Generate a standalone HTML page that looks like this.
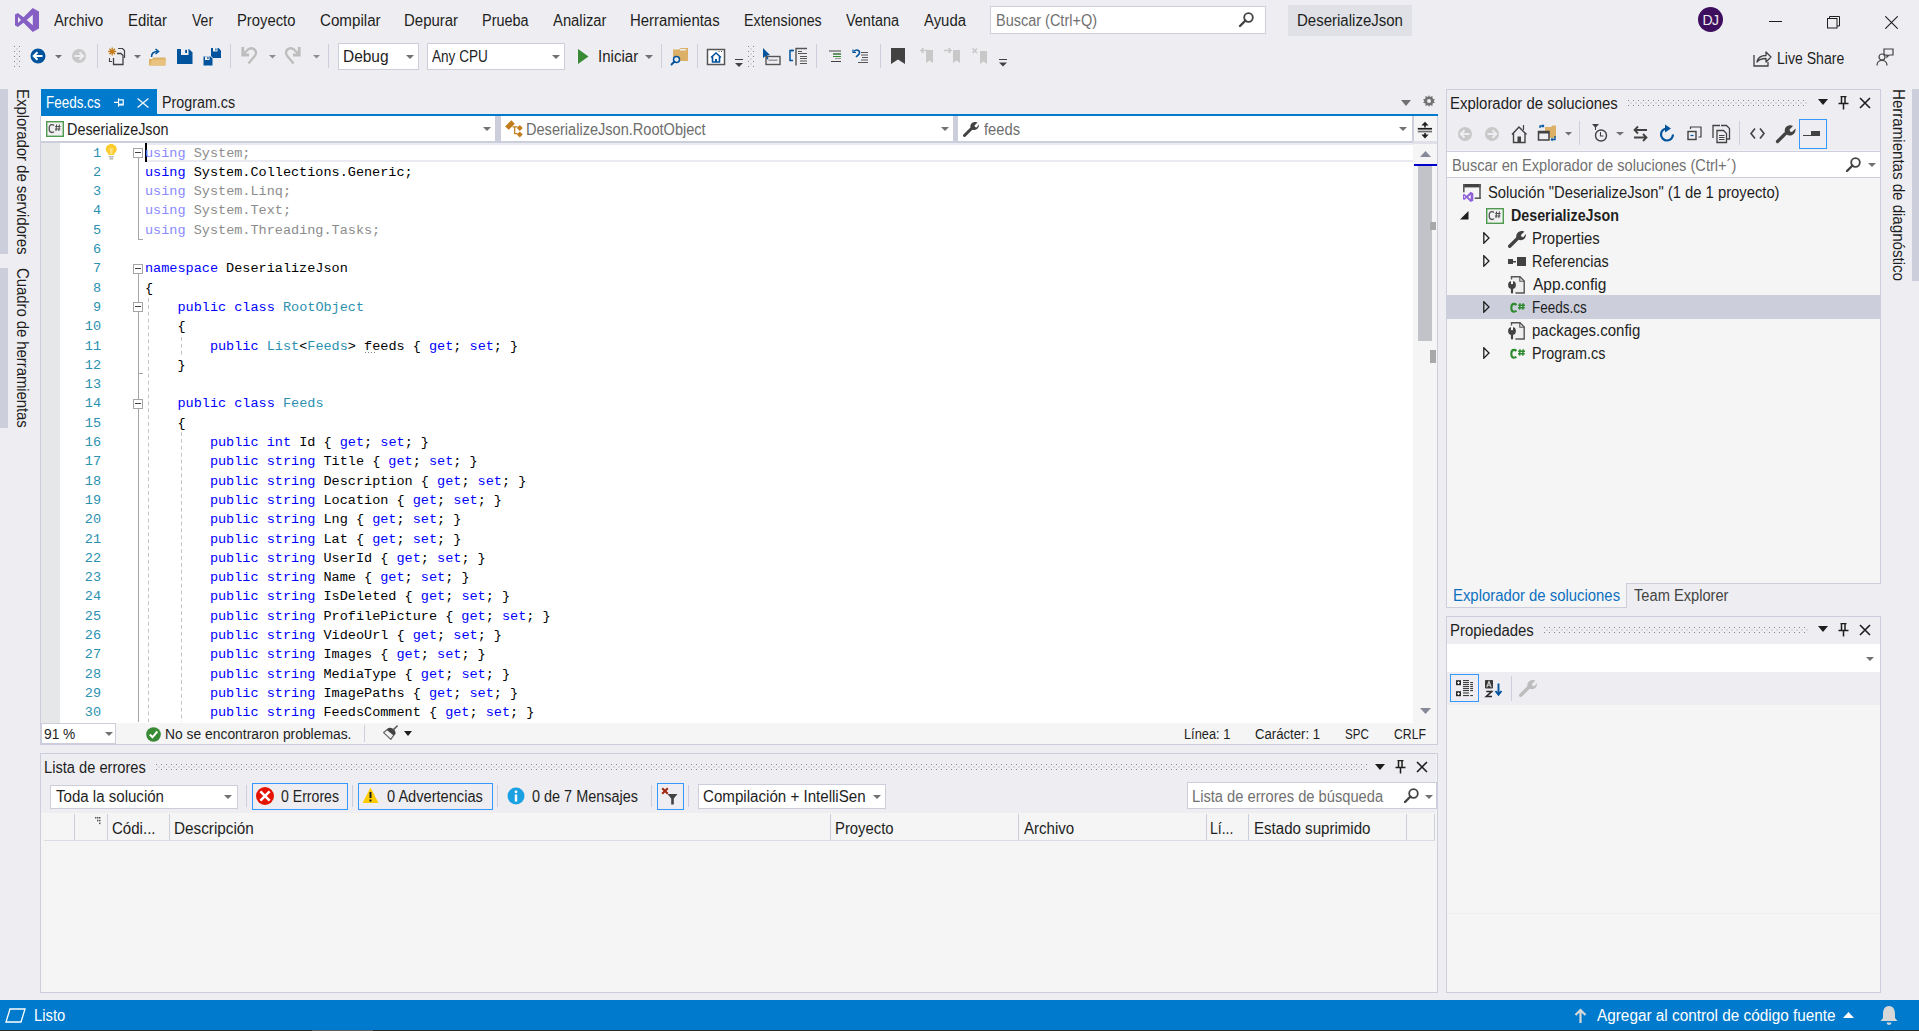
<!DOCTYPE html>
<html><head><meta charset="utf-8">
<style>
*{margin:0;padding:0;box-sizing:border-box}
html,body{width:1919px;height:1031px;overflow:hidden;background:#EEEEF2;font-family:"Liberation Sans",sans-serif;color:#1E1E1E}
.a{position:absolute}
.t{position:absolute;white-space:nowrap;font-size:16px;line-height:19px;transform-origin:0 0}
.sep{position:absolute;width:1px;background:#CCCEDB}
.dd{position:absolute;width:0;height:0;border-left:4px solid transparent;border-right:4px solid transparent;border-top:4px solid #717171}
.grip{position:absolute;background-image:radial-gradient(#B5B5C0 0.8px,transparent 1px);background-size:4px 4px}
.code{position:absolute;left:145px;top:143.6px;font-family:"Liberation Mono",monospace;font-size:13.53px;line-height:19.3px;white-space:pre;color:#000}
.ln{position:absolute;left:60px;width:41px;top:143.6px;font-family:"Liberation Mono",monospace;font-size:13.53px;line-height:19.3px;white-space:pre;color:#2B91AF;text-align:right}
.k{color:#0000FF}.ty{color:#2B91AF}.fk{color:#8A8AFF}.fg{color:#8C8C8C}
</style></head><body>

<!-- ===== TITLE / MENU BAR ===== -->
<svg class="a" style="left:15px;top:8px" width="24" height="24" viewBox="0 0 24 24">
<path d="M17.7 0 L24 3.4 L24 20.6 L17.7 24 L8.5 14.7 L2.8 18.9 L0 17.2 L0 6.5 L2.8 5 L8.5 9.3 Z M17.8 6.7 L11.8 11.9 L17.8 17.2 Z M3 8.7 L3 15.1 L6 11.9 Z" fill="#865FC5" fill-rule="evenodd"/>
</svg>
<div class="t" style="left:53.7px;top:11px;transform:scaleX(0.925)">Archivo</div>
<div class="t" style="left:127.5px;top:11px;transform:scaleX(0.931)">Editar</div>
<div class="t" style="left:191.6px;top:11px;transform:scaleX(0.878)">Ver</div>
<div class="t" style="left:237.1px;top:11px;transform:scaleX(0.925)">Proyecto</div>
<div class="t" style="left:319.7px;top:11px;transform:scaleX(0.947)">Compilar</div>
<div class="t" style="left:404.2px;top:11px;transform:scaleX(0.936)">Depurar</div>
<div class="t" style="left:481.8px;top:11px;transform:scaleX(0.903)">Prueba</div>
<div class="t" style="left:552.7px;top:11px;transform:scaleX(0.926)">Analizar</div>
<div class="t" style="left:630.4px;top:11px;transform:scaleX(0.933)">Herramientas</div>
<div class="t" style="left:744.1px;top:11px;transform:scaleX(0.892)">Extensiones</div>
<div class="t" style="left:845.7px;top:11px;transform:scaleX(0.902)">Ventana</div>
<div class="t" style="left:923.7px;top:11px;transform:scaleX(0.931)">Ayuda</div>

<div class="a" style="left:990px;top:6px;width:276px;height:28px;background:#fff;border:1px solid #CCCEDB"></div>
<div class="t" style="left:995.7px;top:11px;color:#717171;transform:scaleX(0.905)">Buscar (Ctrl+Q)</div>
<svg class="a" style="left:1238px;top:11px" width="17" height="17" viewBox="0 0 17 17"><circle cx="10.5" cy="6.5" r="4.3" fill="none" stroke="#424242" stroke-width="1.8"/><path d="M7.5 9.5 L2 15" stroke="#424242" stroke-width="2.4" stroke-linecap="round"/></svg>

<div class="a" style="left:1288px;top:5px;width:124px;height:31px;background:#DFE1E6"></div>
<div class="t" style="left:1296.8px;top:11px;transform:scaleX(0.938)">DeserializeJson</div>

<div class="a" style="left:1698px;top:7px;width:25px;height:25px;border-radius:50%;background:#3D0F5E"></div>
<div class="t" style="left:1700px;top:11px;width:21px;text-align:center;color:#EDEDED;font-size:14px;letter-spacing:-0.5px">DJ</div>

<div class="a" style="left:1769px;top:21px;width:13px;height:1px;background:#1E1E1E"></div>
<svg class="a" style="left:1827px;top:16px" width="13" height="13" viewBox="0 0 13 13"><rect x="0.5" y="2.5" width="9.5" height="9.5" fill="none" stroke="#1E1E1E"/><path d="M2.5 2.5 V0.5 H12.5 V10 H10" fill="none" stroke="#1E1E1E"/></svg>
<svg class="a" style="left:1885px;top:16px" width="13" height="13" viewBox="0 0 13 13"><path d="M0.3 0.3 L12.7 12.7 M12.7 0.3 L0.3 12.7" stroke="#1E1E1E" stroke-width="1.1"/></svg>

<!-- ===== TOOLBAR ===== -->
<svg class="a" style="left:14px;top:46px" width="6" height="21"><rect x="0" y="0" width="1" height="1" fill="#868686"/><rect x="5" y="0" width="1" height="1" fill="#868686"/><rect x="2.5" y="2.5" width="1" height="1" fill="#A0A0A0"/><rect x="0" y="5" width="1" height="1" fill="#868686"/><rect x="5" y="5" width="1" height="1" fill="#868686"/><rect x="2.5" y="7.5" width="1" height="1" fill="#A0A0A0"/><rect x="0" y="10" width="1" height="1" fill="#868686"/><rect x="5" y="10" width="1" height="1" fill="#868686"/><rect x="2.5" y="12.5" width="1" height="1" fill="#A0A0A0"/><rect x="0" y="15" width="1" height="1" fill="#868686"/><rect x="5" y="15" width="1" height="1" fill="#868686"/><rect x="2.5" y="17.5" width="1" height="1" fill="#A0A0A0"/><rect x="0" y="20" width="1" height="1" fill="#868686"/><rect x="5" y="20" width="1" height="1" fill="#868686"/></svg>

<svg class="a" style="left:0;top:0" width="1919" height="80" viewBox="0 0 1919 80">
<!-- back -->
<circle cx="38" cy="56" r="7.5" fill="#00539C"/>
<path d="M42.5 56 H34 M37.5 52.2 L33.7 56 L37.5 59.8" fill="none" stroke="#fff" stroke-width="2"/>
<path d="M55 55 H62 L58.5 58.5 Z" fill="#717171"/>
<circle cx="79" cy="56" r="7" fill="#C8C8C8"/>
<path d="M74.5 56 H83 M79.5 52.2 L83.3 56 L79.5 59.8" fill="none" stroke="#EEEEF2" stroke-width="2"/>
<rect x="97" y="44" width="1" height="24" fill="#CCCEDB"/>
<!-- new project -->
<path d="M112.2 47.5 V55.5 M108.2 51.5 H116.2 M109.4 48.7 L115 54.3 M115 48.7 L109.4 54.3" stroke="#C27D1A" stroke-width="1.3"/>
<path d="M118 48.5 H122.5 L124.5 50.5 V58" fill="none" stroke="#424242" stroke-width="1.2"/>
<path d="M113.5 58 V64.5 H123 V55.5 L121 53.5 H117" fill="#EEEEF2" stroke="#424242" stroke-width="1.3"/>
<path d="M109.5 58 V61.5 H112" fill="none" stroke="#424242" stroke-width="1.1"/>
<path d="M134 55 H141 L137.5 58.5 Z" fill="#717171"/>
<!-- open -->
<path d="M149 59 H152 L153.5 57.5 H165.5 V65.5 H149 Z" fill="#DCB067"/>
<path d="M149.5 65.5 L152.5 59.5 H166.5 L164 65.5 Z" fill="#E8C27E"/>
<path d="M151.5 57 C151.5 53 154 51.5 157.5 51.5" fill="none" stroke="#00539C" stroke-width="1.6"/>
<path d="M155.5 49 L158.5 51.5 L155.5 54" fill="none" stroke="#00539C" stroke-width="1.6"/>
<!-- save -->
<path d="M177 49 H189 L192.5 52.5 V64 H177 Z" fill="#00539C"/>
<rect x="181" y="49" width="7.5" height="6" fill="#EEEEF2"/>
<rect x="185.2" y="49.8" width="1.8" height="3.2" fill="#00539C"/>
<!-- save all -->
<path d="M211 48 H218.5 L221 50.5 V58 H211 Z" fill="#00539C"/>
<rect x="213" y="48" width="4.5" height="3.5" fill="#EEEEF2"/>
<rect x="215.3" y="48.5" width="1.2" height="2" fill="#00539C"/>
<path d="M203 56 H210.5 L213 58.5 V66 H203 Z" fill="#00539C" stroke="#EEEEF2" stroke-width="1"/>
<rect x="205" y="56.5" width="4.5" height="3.5" fill="#EEEEF2"/>
<rect x="207.3" y="57" width="1.2" height="2" fill="#00539C"/>
<rect x="230" y="44" width="1" height="24" fill="#CCCEDB"/>
<!-- undo/redo -->
<path d="M242.8 47 V55 H249" fill="none" stroke="#BDBDBD" stroke-width="2.8"/>
<path d="M243.5 54 L248 49.5 C251 47 256 48.5 256 53 C256 55.5 253 58 248.5 63.5" fill="none" stroke="#BDBDBD" stroke-width="2.3"/>
<path d="M269 55 H276 L272.5 58.5 Z" fill="#8E8E8E"/>
<path d="M299.2 47 V55 H293" fill="none" stroke="#BDBDBD" stroke-width="2.8"/>
<path d="M298.5 54 L294 49.5 C291 47 286 48.5 286 53 C286 55.5 289 58 293.5 63.5" fill="none" stroke="#BDBDBD" stroke-width="2.3"/>
<path d="M313 55 H320 L316.5 58.5 Z" fill="#8E8E8E"/>
<rect x="328" y="44" width="1" height="24" fill="#CCCEDB"/>
<rect x="661" y="44" width="1" height="24" fill="#CCCEDB"/>
<!-- find in files -->
<path d="M673 49.5 H679 L680.5 48 H688 V61 H673 Z" fill="#DCB067"/>
<rect x="680" y="49" width="6" height="1.5" fill="#EEEEF2"/>
<circle cx="676.5" cy="59.5" r="3" fill="#EEEEF2" stroke="#00539C" stroke-width="1.5"/>
<path d="M674.5 61.5 L671.5 64.5" stroke="#00539C" stroke-width="1.8" stroke-linecap="round"/>
<rect x="697" y="44" width="1" height="24" fill="#CCCEDB"/>
<!-- browser -->
<rect x="707.5" y="49.5" width="17" height="15" fill="#fff" stroke="#555" stroke-width="1.5"/>
<path d="M711 57.5 L716 53 L721 57.5 M712.5 56.5 V62 H719.5 V56.5" fill="none" stroke="#00539C" stroke-width="1.6"/>
<rect x="715" y="59" width="2" height="3" fill="#00539C"/>
<rect x="718.5" y="51" width="1" height="1" fill="#555"/><rect x="721" y="51" width="1" height="1" fill="#555"/>
<rect x="735" y="59" width="8" height="1" fill="#424242"/>
<path d="M735 63 H743 L739 67 Z" fill="#424242"/>
<!-- cursor box -->
<path d="M763 48 L770 55 L767 55.5 L768.5 59 L767 59.5 L765.5 56 L763 58 Z" fill="#00539C"/>
<rect x="766" y="56.5" width="14" height="8" fill="none" stroke="#555" stroke-width="1.4"/>
<rect x="768.5" y="59.5" width="9" height="1.5" fill="#999"/>
<!-- brackets -->
<path d="M793 50.5 H790 V60.5 H793" fill="none" stroke="#00539C" stroke-width="1.5"/>
<path d="M791 50.5 H794" stroke="#00539C" stroke-width="1.5"/>
<path d="M796 65.5 V48.5 H807" fill="none" stroke="#555" stroke-width="1.4"/>
<path d="M798 51.5 H802 M798 53.5 H807 M800 56.5 H807 M800 58.5 H807 M800 61 H807 M800 63.5 H807" stroke="#555" stroke-width="1"/>
<rect x="816" y="44" width="1" height="24" fill="#CCCEDB"/>
<!-- indent -->
<path d="M829 51 H841 M833 54 H841 M833 56.5 H841 M831 61.5 H841" stroke="#424242" stroke-width="1.1"/>
<path d="M833 54 H841 M833 56.5 H841" stroke="#388A34" stroke-width="1.1"/>
<path d="M835 58.5 H841" stroke="#999" stroke-width="1.1"/>
<path d="M854 51.5 C856 49 860 50 859.5 53 C859 55 857 56 856 57" fill="none" stroke="#00539C" stroke-width="1.5"/>
<path d="M853 49.5 V52.5 H856" fill="none" stroke="#00539C" stroke-width="1.2"/>
<path d="M861 52.5 H868 M861 55 H868 M862 57.5 H868 M861 60 H868 M858 62.5 H868" stroke="#555" stroke-width="1.1"/>
<rect x="880" y="44" width="1" height="24" fill="#CCCEDB"/>
<!-- bookmarks -->
<path d="M891 48 H905 V64 L898 59.5 L891 64 Z" fill="#424242"/>
<path d="M926 50 H933 V63 L929.5 60.5 L926 63 Z" fill="#C8C8C8"/>
<path d="M928 50.5 H921 M923.5 48 L921 50.5 L923.5 53" fill="none" stroke="#C8C8C8" stroke-width="1.5"/>
<path d="M953 50 H960 V63 L956.5 60.5 L953 63 Z" fill="#C8C8C8"/>
<path d="M944 50.5 H951 M948.5 48 L951 50.5 L948.5 53" fill="none" stroke="#C8C8C8" stroke-width="1.5"/>
<path d="M980 51 H987 V64 L983.5 61.5 L980 64 Z" fill="#C8C8C8"/>
<path d="M972.5 48.5 L977 53 M977 48.5 L972.5 53" stroke="#C8C8C8" stroke-width="1.5"/>
<rect x="999" y="59" width="8" height="1" fill="#424242"/>
<path d="M999 62.5 H1007 L1003 66.5 Z" fill="#424242"/>
</svg>


<div class="a" style="left:338px;top:43px;width:81px;height:27px;background:#fff;border:1px solid #CCCEDB"></div>
<div class="t" style="left:342.5px;top:47px;transform:scaleX(0.966)">Debug</div>
<div class="dd" style="left:406px;top:55px"></div>
<div class="a" style="left:427px;top:43px;width:138px;height:27px;background:#fff;border:1px solid #CCCEDB"></div>
<div class="t" style="left:432.2px;top:47px;transform:scaleX(0.849)">Any CPU</div>
<div class="dd" style="left:552px;top:55px"></div>
<svg class="a" style="left:578px;top:49px" width="11" height="15" viewBox="0 0 11 15"><path d="M0 0 L10.5 7.5 L0 15 Z" fill="#388A34"/></svg>
<div class="t" style="left:598.3px;top:47px;transform:scaleX(0.941)">Iniciar</div>
<div class="dd" style="left:645px;top:55px"></div>

<div class="a" style="left:1753px;top:50px"><svg width="19" height="17" viewBox="0 0 19 17"><path d="M1 5 V16 H15 V12" fill="none" stroke="#424242" stroke-width="1.3"/><path d="M4 12 C5 7 9 5.5 13 5.5 V2 L18 7 L13 12 V8.5 C9 8.5 6 9.5 4 12 Z" fill="none" stroke="#424242" stroke-width="1.3" stroke-linejoin="round"/></svg></div>
<div class="t" style="left:1777.4px;top:49px;transform:scaleX(0.879)">Live Share</div>
<svg class="a" style="left:1876px;top:48px" width="18" height="18" viewBox="0 0 18 18"><circle cx="6" cy="9" r="3" fill="none" stroke="#424242" stroke-width="1.2"/><path d="M1 17.5 C1 13.5 3 12.5 6 12.5 C9 12.5 11 13.5 11 17.5" fill="none" stroke="#424242" stroke-width="1.2"/><path d="M8 1 H17 V7 H13 L11 9 V7 H8 Z" fill="none" stroke="#424242" stroke-width="1.2"/></svg>

<svg class="a" style="left:748px;top:46px" width="6" height="21"><rect x="0" y="0" width="1" height="1" fill="#868686"/><rect x="5" y="0" width="1" height="1" fill="#868686"/><rect x="2.5" y="2.5" width="1" height="1" fill="#A0A0A0"/><rect x="0" y="5" width="1" height="1" fill="#868686"/><rect x="5" y="5" width="1" height="1" fill="#868686"/><rect x="2.5" y="7.5" width="1" height="1" fill="#A0A0A0"/><rect x="0" y="10" width="1" height="1" fill="#868686"/><rect x="5" y="10" width="1" height="1" fill="#868686"/><rect x="2.5" y="12.5" width="1" height="1" fill="#A0A0A0"/><rect x="0" y="15" width="1" height="1" fill="#868686"/><rect x="5" y="15" width="1" height="1" fill="#868686"/><rect x="2.5" y="17.5" width="1" height="1" fill="#A0A0A0"/><rect x="0" y="20" width="1" height="1" fill="#868686"/><rect x="5" y="20" width="1" height="1" fill="#868686"/></svg>
<!-- ===== LEFT SIDE TABS ===== -->
<div class="a" style="left:0;top:89px;width:8px;height:165px;background:#CCCEDB"></div>
<div class="a" style="left:0;top:268px;width:8px;height:160px;background:#CCCEDB"></div>
<div class="t" style="left:12.5px;top:89px;writing-mode:vertical-rl;line-height:18px;letter-spacing:-0.1px;transform:scaleY(0.943)">Explorador de servidores</div>
<div class="t" style="left:12.5px;top:268px;writing-mode:vertical-rl;line-height:18px;letter-spacing:-0.1px;transform:scaleY(0.938)">Cuadro de herramientas</div>

<!-- ===== RIGHT SIDE TAB ===== -->
<div class="a" style="left:1912px;top:89px;width:7px;height:192px;background:#CCCEDB"></div>
<div class="t" style="left:1889px;top:89px;writing-mode:vertical-rl;line-height:18px;letter-spacing:-0.1px;transform:scaleY(0.955)">Herramientas de diagnóstico</div>

<!-- ===== EDITOR ===== -->
<div class="a" style="left:41px;top:89px;width:116px;height:25px;background:#007ACC"></div>
<div class="t" style="left:45.7px;top:93px;color:#fff;transform:scaleX(0.840)">Feeds.cs</div>
<svg class="a" style="left:112px;top:96px" width="14" height="13" viewBox="112 96 14 13"><path d="M114 102.4 H118.5 M118.5 98.2 V106.7" stroke="#fff" stroke-width="1.1"/><path d="M118.5 99.8 H123.2 V104.8 H118.5" fill="none" stroke="#fff" stroke-width="1.2"/><rect x="118.5" y="103.6" width="4.8" height="1.6" fill="#EAF2FA"/></svg>
<svg class="a" style="left:136px;top:97px" width="14" height="12" viewBox="136 97 14 12"><path d="M137.6 98.5 L148.4 107.5 M148.4 98.5 L137.6 107.5" stroke="#EEF4FA" stroke-width="1.4"/></svg>
<div class="t" style="left:162.4px;top:93px;transform:scaleX(0.893)">Program.cs</div>
<svg class="a" style="left:1401px;top:100px" width="10" height="6" viewBox="0 0 10 6"><path d="M0 0 H10 L5 6 Z" fill="#717171"/></svg>
<svg class="a" style="left:1423px;top:95px" width="12" height="12" viewBox="0 0 12 12"><path d="M6 0 L7 2 L9.5 1 L9.5 3.5 L12 4.5 L10.5 6 L12 7.5 L9.5 8.5 L9.5 11 L7 10 L6 12 L5 10 L2.5 11 L2.5 8.5 L0 7.5 L1.5 6 L0 4.5 L2.5 3.5 L2.5 1 L5 2 Z" fill="#717171"/><circle cx="6" cy="6" r="2" fill="#EEEEF2"/></svg>

<div class="a" style="left:41px;top:114px;width:1397px;height:2px;background:#007ACC"></div>
<div class="a" style="left:40px;top:116px;width:1398px;height:629px;background:#F5F5F5;border-left:1px solid #CCCEDB;border-right:1px solid #CCCEDB;border-bottom:1px solid #CCCEDB"></div>
<!-- nav bar -->
<div class="a" style="left:41px;top:116px;width:1373px;height:27px;background:#CCCEDB"></div>
<div class="a" style="left:41px;top:116px;width:454px;height:25px;background:#fff"></div>
<div class="a" style="left:501px;top:116px;width:452px;height:25px;background:#fff"></div>
<div class="a" style="left:958px;top:116px;width:454px;height:25px;background:#fff"></div>
<div class="a" style="left:1414px;top:116px;width:23px;height:28px;background:#F5F5F5"></div>
<svg class="a" style="left:46px;top:121px" width="18" height="16" viewBox="0 0 18 16"><rect x="0.7" y="0.7" width="16.6" height="14.6" fill="#F0F0F0" stroke="#4E9A4E" stroke-width="1.4"/><path d="M8 4.6 C7.5 4 6.8 3.7 6 3.7 C4.3 3.7 3.2 5.2 3.2 7.6 C3.2 10 4.3 11.5 6 11.5 C6.8 11.5 7.5 11.2 8 10.6" fill="none" stroke="#505050" stroke-width="1.3"/><path d="M10.6 3.5 L10 10 M13.4 3.5 L12.8 10 M9.2 5.5 H14.6 M9 8 H14.4" stroke="#505050" stroke-width="1.1"/></svg>
<div class="t" style="left:66.7px;top:120px;transform:scaleX(0.899)">DeserializeJson</div>
<svg class="a" style="left:483px;top:127px" width="8" height="4" viewBox="0 0 8 4"><path d="M0 0 H8 L4 4 Z" fill="#717171"/></svg>
<svg class="a" style="left:503px;top:118px" width="22" height="22" viewBox="503 118 22 22"><path d="M511.4 120.2 L514.8 123.8 L508.8 129.8 L505.2 126.4 Z" fill="#C27D1A"/><path d="M512.5 126.8 H517.5 M514.7 126.8 V133.6 H517.5" fill="none" stroke="#C27D1A" stroke-width="1.2"/><path d="M519.8 124.9 L522.7 127.9 L519.8 130.9 L516.9 127.9 Z" fill="#C27D1A"/><path d="M519.8 131.6 L522.7 134.6 L519.8 137.6 L516.9 134.6 Z" fill="#C27D1A"/></svg>
<div class="t" style="left:525.8px;top:120px;color:#6D6D6D;transform:scaleX(0.910)">DeserializeJson.RootObject</div>
<svg class="a" style="left:941px;top:127px" width="8" height="4" viewBox="0 0 8 4"><path d="M0 0 H8 L4 4 Z" fill="#717171"/></svg>
<svg class="a" style="left:963px;top:121px" width="16" height="16" viewBox="0 0 16 16"><path d="M1.5 14.5 L8 8" stroke="#424242" stroke-width="3" stroke-linecap="round"/><path d="M9 2 C11 0.5 14 0.8 14.5 1.5 L11.5 4.5 L12 6 L13.5 6.5 L16 3.5 C16.3 6 14.5 9 11.5 9 C10 9 8.5 8.5 7.5 7.5 C7 5 7.5 3.5 9 2 Z" fill="#424242"/></svg>
<div class="t" style="left:983.9px;top:120px;color:#6D6D6D;transform:scaleX(0.921)">feeds</div>
<svg class="a" style="left:1399px;top:127px" width="8" height="4" viewBox="0 0 8 4"><path d="M0 0 H8 L4 4 Z" fill="#717171"/></svg>
<svg class="a" style="left:1414px;top:118px" width="23" height="24" viewBox="1414 118 23 24"><path d="M1425 121.8 L1428.6 125.6 H1421.4 Z M1425 138.4 L1428.6 134.6 H1421.4 Z" fill="#1E1E1E"/><path d="M1425 125 V127.6 M1425 133 V135.2" stroke="#1E1E1E" stroke-width="1.5"/><rect x="1417.8" y="127.9" width="14.2" height="1.7" fill="#1E1E1E"/><rect x="1417.8" y="130.7" width="14.2" height="1.7" fill="#6E6E6E"/></svg><div class="a" style="left:1413px;top:141px;width:24px;height:3px;background:#DFE0E8"></div>

<!-- code area -->
<div class="a" style="left:41px;top:143px;width:19px;height:580px;background:#E6E7E8"></div>
<div class="a" style="left:60px;top:143px;width:1353px;height:580px;background:#fff"></div>
<div class="a" style="left:145px;top:143px;width:1268px;height:19px;border:2px solid #EAEAF2;border-left:none;border-right:none"></div>
<div class="a" style="left:145px;top:143px;width:2px;height:19px;background:#000"></div>
<!-- outlining -->
<div class="a" style="left:138px;top:158px;width:1px;height:82px;background:#A5A5A5"></div>
<div class="a" style="left:138px;top:239px;width:5px;height:1px;background:#A5A5A5"></div>
<div class="a" style="left:138px;top:273px;width:1px;height:449px;background:#A5A5A5"></div>
<div class="a" style="left:138px;top:373px;width:5px;height:1px;background:#A5A5A5"></div>
<div class="a" style="left:133px;top:148px;width:10px;height:10px;border:1px solid #A5A5A5;background:#fff"></div>
<div class="a" style="left:135px;top:152px;width:6px;height:1px;background:#424242"></div>
<div class="a" style="left:133px;top:264px;width:10px;height:10px;border:1px solid #A5A5A5;background:#fff"></div>
<div class="a" style="left:135px;top:268px;width:6px;height:1px;background:#424242"></div>
<div class="a" style="left:133px;top:302px;width:10px;height:10px;border:1px solid #A5A5A5;background:#fff"></div>
<div class="a" style="left:135px;top:306px;width:6px;height:1px;background:#424242"></div>
<div class="a" style="left:133px;top:399px;width:10px;height:10px;border:1px solid #A5A5A5;background:#fff"></div>
<div class="a" style="left:135px;top:403px;width:6px;height:1px;background:#424242"></div>
<!-- indent guides -->
<div class="a" style="left:148px;top:298px;width:1px;height:424px;background-image:linear-gradient(#C4C4C4 50%,transparent 50%);background-size:1px 6.9px"></div>
<div class="a" style="left:181px;top:337px;width:1px;height:20px;background-image:linear-gradient(#C4C4C4 50%,transparent 50%);background-size:1px 6.9px"></div>
<div class="a" style="left:181px;top:432px;width:1px;height:290px;background-image:linear-gradient(#C4C4C4 50%,transparent 50%);background-size:1px 6.9px"></div>
<!-- lightbulb -->
<svg class="a" style="left:105px;top:143px" width="13" height="18" viewBox="0 0 13 18"><path d="M6.3 1 C9.3 1 11.8 3.3 11.8 6.3 C11.8 8.3 10.5 9.5 9.2 10.8 V12 H3.4 V10.8 C2.1 9.5 0.8 8.3 0.8 6.3 C0.8 3.3 3.3 1 6.3 1 Z" fill="#FDCB2B"/><path d="M3.8 5.2 H8.8 L7.6 7.2 V11 H5 V7.2 Z" fill="#FEE9A0" opacity="0.7"/><path d="M3.8 13.8 H8.8 M4.4 15.8 H8.2" stroke="#ABABAB" stroke-width="1.2"/></svg>
<div class="ln">1
2
3
4
5
6
7
8
9
10
11
12
13
14
15
16
17
18
19
20
21
22
23
24
25
26
27
28
29
30</div>
<div class="code"><span class="fk">using</span> <span class="fg">System;</span>
<span class="k">using</span> System.Collections.Generic;
<span class="fk">using</span> <span class="fg">System.Linq;</span>
<span class="fk">using</span> <span class="fg">System.Text;</span>
<span class="fk">using</span> <span class="fg">System.Threading.Tasks;</span>

<span class="k">namespace</span> DeserializeJson
{
    <span class="k">public</span> <span class="k">class</span> <span class="ty">RootObject</span>
    {
        <span class="k">public</span> <span class="ty">List</span>&lt;<span class="ty">Feeds</span>&gt; feeds { <span class="k">get</span>; <span class="k">set</span>; }
    }

    <span class="k">public</span> <span class="k">class</span> <span class="ty">Feeds</span>
    {
        <span class="k">public</span> <span class="k">int</span> Id { <span class="k">get</span>; <span class="k">set</span>; }
        <span class="k">public</span> <span class="k">string</span> Title { <span class="k">get</span>; <span class="k">set</span>; }
        <span class="k">public</span> <span class="k">string</span> Description { <span class="k">get</span>; <span class="k">set</span>; }
        <span class="k">public</span> <span class="k">string</span> Location { <span class="k">get</span>; <span class="k">set</span>; }
        <span class="k">public</span> <span class="k">string</span> Lng { <span class="k">get</span>; <span class="k">set</span>; }
        <span class="k">public</span> <span class="k">string</span> Lat { <span class="k">get</span>; <span class="k">set</span>; }
        <span class="k">public</span> <span class="k">string</span> UserId { <span class="k">get</span>; <span class="k">set</span>; }
        <span class="k">public</span> <span class="k">string</span> Name { <span class="k">get</span>; <span class="k">set</span>; }
        <span class="k">public</span> <span class="k">string</span> IsDeleted { <span class="k">get</span>; <span class="k">set</span>; }
        <span class="k">public</span> <span class="k">string</span> ProfilePicture { <span class="k">get</span>; <span class="k">set</span>; }
        <span class="k">public</span> <span class="k">string</span> VideoUrl { <span class="k">get</span>; <span class="k">set</span>; }
        <span class="k">public</span> <span class="k">string</span> Images { <span class="k">get</span>; <span class="k">set</span>; }
        <span class="k">public</span> <span class="k">string</span> MediaType { <span class="k">get</span>; <span class="k">set</span>; }
        <span class="k">public</span> <span class="k">string</span> ImagePaths { <span class="k">get</span>; <span class="k">set</span>; }
        <span class="k">public</span> <span class="k">string</span> FeedsComment { <span class="k">get</span>; <span class="k">set</span>; }</div>
<div class="a" style="left:365px;top:352px;width:12px;height:1px;background-image:linear-gradient(90deg,#808080 50%,transparent 50%);background-size:3px 1px"></div>

<!-- scrollbar -->
<div class="a" style="left:1413px;top:144px;width:24px;height:579px;background:#F5F5F5"></div>
<svg class="a" style="left:1420px;top:151px" width="11" height="6" viewBox="0 0 11 6"><path d="M0 6 L5.5 0 L11 6 Z" fill="#868999"/></svg>
<div class="a" style="left:1414px;top:164px;width:23px;height:2px;background:#0000CD"></div>
<div class="a" style="left:1418px;top:166px;width:14px;height:175px;background:#C2C3C9"></div>
<div class="a" style="left:1430px;top:222px;width:6px;height:8px;background:#A8A8A8"></div>
<div class="a" style="left:1430px;top:350px;width:6px;height:13px;background:#A8A8A8"></div>
<svg class="a" style="left:1420px;top:708px" width="11" height="6" viewBox="0 0 11 6"><path d="M0 0 L5.5 6 L11 0 Z" fill="#868999"/></svg>

<!-- editor status row -->
<div class="a" style="left:41px;top:723px;width:75px;height:21px;background:#fff;border:1px solid #CCCEDB"></div>
<div class="t" style="left:44.0px;top:725px;font-size:14px;transform:scaleX(0.982)">91 %</div>
<svg class="a" style="left:105px;top:732px" width="8" height="4" viewBox="0 0 8 4"><path d="M0 0 H8 L4 4 Z" fill="#717171"/></svg>
<svg class="a" style="left:146px;top:727px" width="15" height="15" viewBox="0 0 15 15"><circle cx="7.5" cy="7.5" r="7.3" fill="#388A34"/><path d="M3.8 7.5 L6.5 10.3 L11.3 4.5" fill="none" stroke="#fff" stroke-width="2"/></svg>
<div class="t" style="left:164.9px;top:725px;font-size:14px;transform:scaleX(0.990)">No se encontraron problemas.</div>
<div class="a" style="left:364px;top:725px;width:1px;height:17px;background:#CCCEDB"></div>
<svg class="a" style="left:380px;top:722px" width="20" height="22" viewBox="380 722 20 22"><path d="M383.6 732.6 L388.6 728.6 L395.2 733.2 L390.8 739.4 Z" fill="#F0F0F0" stroke="#6A6A6A" stroke-width="1.3" stroke-linejoin="round"/><path d="M386.8 730 L389.3 727.8 C391.5 727.6 393.3 728.6 394.8 730.6 C395.6 732 395.5 733.3 394.6 734.4 L393.6 735.6 Z" fill="#424242"/><path d="M393.2 729.8 L397.2 726" stroke="#5A5A5A" stroke-width="1.6" stroke-linecap="round"/></svg>
<svg class="a" style="left:404px;top:731px" width="8" height="5" viewBox="0 0 8 5"><path d="M0 0 H8 L4 5 Z" fill="#1E1E1E"/></svg>
<div class="t" style="left:1184.3px;top:725px;font-size:14px;transform:scaleX(0.914)">Línea: 1</div>
<div class="t" style="left:1254.9px;top:725px;font-size:14px;transform:scaleX(0.939)">Carácter: 1</div>
<div class="t" style="left:1345.1px;top:725px;font-size:14px;transform:scaleX(0.827)">SPC</div>
<div class="t" style="left:1393.7px;top:725px;font-size:14px;transform:scaleX(0.874)">CRLF</div>

<!-- ===== ERROR LIST ===== -->
<div class="a" style="left:40px;top:753px;width:1398px;height:240px;background:#F5F5F5;border:1px solid #CCCEDB"></div>
<div class="a" style="left:41px;top:754px;width:1395px;height:59px;background:#EEEEF2"></div>
<div class="t" style="left:44.1px;top:758px;transform:scaleX(0.916)">Lista de errores</div>
<svg class="a" style="left:156px;top:764px" width="1213" height="6"><rect x="0" y="0" width="1" height="1" fill="#868686"/><rect x="0" y="5" width="1" height="1" fill="#868686"/><rect x="2.5" y="2.5" width="1" height="1" fill="#A0A0A0"/><rect x="5" y="0" width="1" height="1" fill="#868686"/><rect x="5" y="5" width="1" height="1" fill="#868686"/><rect x="7.5" y="2.5" width="1" height="1" fill="#A0A0A0"/><rect x="10" y="0" width="1" height="1" fill="#868686"/><rect x="10" y="5" width="1" height="1" fill="#868686"/><rect x="12.5" y="2.5" width="1" height="1" fill="#A0A0A0"/><rect x="15" y="0" width="1" height="1" fill="#868686"/><rect x="15" y="5" width="1" height="1" fill="#868686"/><rect x="17.5" y="2.5" width="1" height="1" fill="#A0A0A0"/><rect x="20" y="0" width="1" height="1" fill="#868686"/><rect x="20" y="5" width="1" height="1" fill="#868686"/><rect x="22.5" y="2.5" width="1" height="1" fill="#A0A0A0"/><rect x="25" y="0" width="1" height="1" fill="#868686"/><rect x="25" y="5" width="1" height="1" fill="#868686"/><rect x="27.5" y="2.5" width="1" height="1" fill="#A0A0A0"/><rect x="30" y="0" width="1" height="1" fill="#868686"/><rect x="30" y="5" width="1" height="1" fill="#868686"/><rect x="32.5" y="2.5" width="1" height="1" fill="#A0A0A0"/><rect x="35" y="0" width="1" height="1" fill="#868686"/><rect x="35" y="5" width="1" height="1" fill="#868686"/><rect x="37.5" y="2.5" width="1" height="1" fill="#A0A0A0"/><rect x="40" y="0" width="1" height="1" fill="#868686"/><rect x="40" y="5" width="1" height="1" fill="#868686"/><rect x="42.5" y="2.5" width="1" height="1" fill="#A0A0A0"/><rect x="45" y="0" width="1" height="1" fill="#868686"/><rect x="45" y="5" width="1" height="1" fill="#868686"/><rect x="47.5" y="2.5" width="1" height="1" fill="#A0A0A0"/><rect x="50" y="0" width="1" height="1" fill="#868686"/><rect x="50" y="5" width="1" height="1" fill="#868686"/><rect x="52.5" y="2.5" width="1" height="1" fill="#A0A0A0"/><rect x="55" y="0" width="1" height="1" fill="#868686"/><rect x="55" y="5" width="1" height="1" fill="#868686"/><rect x="57.5" y="2.5" width="1" height="1" fill="#A0A0A0"/><rect x="60" y="0" width="1" height="1" fill="#868686"/><rect x="60" y="5" width="1" height="1" fill="#868686"/><rect x="62.5" y="2.5" width="1" height="1" fill="#A0A0A0"/><rect x="65" y="0" width="1" height="1" fill="#868686"/><rect x="65" y="5" width="1" height="1" fill="#868686"/><rect x="67.5" y="2.5" width="1" height="1" fill="#A0A0A0"/><rect x="70" y="0" width="1" height="1" fill="#868686"/><rect x="70" y="5" width="1" height="1" fill="#868686"/><rect x="72.5" y="2.5" width="1" height="1" fill="#A0A0A0"/><rect x="75" y="0" width="1" height="1" fill="#868686"/><rect x="75" y="5" width="1" height="1" fill="#868686"/><rect x="77.5" y="2.5" width="1" height="1" fill="#A0A0A0"/><rect x="80" y="0" width="1" height="1" fill="#868686"/><rect x="80" y="5" width="1" height="1" fill="#868686"/><rect x="82.5" y="2.5" width="1" height="1" fill="#A0A0A0"/><rect x="85" y="0" width="1" height="1" fill="#868686"/><rect x="85" y="5" width="1" height="1" fill="#868686"/><rect x="87.5" y="2.5" width="1" height="1" fill="#A0A0A0"/><rect x="90" y="0" width="1" height="1" fill="#868686"/><rect x="90" y="5" width="1" height="1" fill="#868686"/><rect x="92.5" y="2.5" width="1" height="1" fill="#A0A0A0"/><rect x="95" y="0" width="1" height="1" fill="#868686"/><rect x="95" y="5" width="1" height="1" fill="#868686"/><rect x="97.5" y="2.5" width="1" height="1" fill="#A0A0A0"/><rect x="100" y="0" width="1" height="1" fill="#868686"/><rect x="100" y="5" width="1" height="1" fill="#868686"/><rect x="102.5" y="2.5" width="1" height="1" fill="#A0A0A0"/><rect x="105" y="0" width="1" height="1" fill="#868686"/><rect x="105" y="5" width="1" height="1" fill="#868686"/><rect x="107.5" y="2.5" width="1" height="1" fill="#A0A0A0"/><rect x="110" y="0" width="1" height="1" fill="#868686"/><rect x="110" y="5" width="1" height="1" fill="#868686"/><rect x="112.5" y="2.5" width="1" height="1" fill="#A0A0A0"/><rect x="115" y="0" width="1" height="1" fill="#868686"/><rect x="115" y="5" width="1" height="1" fill="#868686"/><rect x="117.5" y="2.5" width="1" height="1" fill="#A0A0A0"/><rect x="120" y="0" width="1" height="1" fill="#868686"/><rect x="120" y="5" width="1" height="1" fill="#868686"/><rect x="122.5" y="2.5" width="1" height="1" fill="#A0A0A0"/><rect x="125" y="0" width="1" height="1" fill="#868686"/><rect x="125" y="5" width="1" height="1" fill="#868686"/><rect x="127.5" y="2.5" width="1" height="1" fill="#A0A0A0"/><rect x="130" y="0" width="1" height="1" fill="#868686"/><rect x="130" y="5" width="1" height="1" fill="#868686"/><rect x="132.5" y="2.5" width="1" height="1" fill="#A0A0A0"/><rect x="135" y="0" width="1" height="1" fill="#868686"/><rect x="135" y="5" width="1" height="1" fill="#868686"/><rect x="137.5" y="2.5" width="1" height="1" fill="#A0A0A0"/><rect x="140" y="0" width="1" height="1" fill="#868686"/><rect x="140" y="5" width="1" height="1" fill="#868686"/><rect x="142.5" y="2.5" width="1" height="1" fill="#A0A0A0"/><rect x="145" y="0" width="1" height="1" fill="#868686"/><rect x="145" y="5" width="1" height="1" fill="#868686"/><rect x="147.5" y="2.5" width="1" height="1" fill="#A0A0A0"/><rect x="150" y="0" width="1" height="1" fill="#868686"/><rect x="150" y="5" width="1" height="1" fill="#868686"/><rect x="152.5" y="2.5" width="1" height="1" fill="#A0A0A0"/><rect x="155" y="0" width="1" height="1" fill="#868686"/><rect x="155" y="5" width="1" height="1" fill="#868686"/><rect x="157.5" y="2.5" width="1" height="1" fill="#A0A0A0"/><rect x="160" y="0" width="1" height="1" fill="#868686"/><rect x="160" y="5" width="1" height="1" fill="#868686"/><rect x="162.5" y="2.5" width="1" height="1" fill="#A0A0A0"/><rect x="165" y="0" width="1" height="1" fill="#868686"/><rect x="165" y="5" width="1" height="1" fill="#868686"/><rect x="167.5" y="2.5" width="1" height="1" fill="#A0A0A0"/><rect x="170" y="0" width="1" height="1" fill="#868686"/><rect x="170" y="5" width="1" height="1" fill="#868686"/><rect x="172.5" y="2.5" width="1" height="1" fill="#A0A0A0"/><rect x="175" y="0" width="1" height="1" fill="#868686"/><rect x="175" y="5" width="1" height="1" fill="#868686"/><rect x="177.5" y="2.5" width="1" height="1" fill="#A0A0A0"/><rect x="180" y="0" width="1" height="1" fill="#868686"/><rect x="180" y="5" width="1" height="1" fill="#868686"/><rect x="182.5" y="2.5" width="1" height="1" fill="#A0A0A0"/><rect x="185" y="0" width="1" height="1" fill="#868686"/><rect x="185" y="5" width="1" height="1" fill="#868686"/><rect x="187.5" y="2.5" width="1" height="1" fill="#A0A0A0"/><rect x="190" y="0" width="1" height="1" fill="#868686"/><rect x="190" y="5" width="1" height="1" fill="#868686"/><rect x="192.5" y="2.5" width="1" height="1" fill="#A0A0A0"/><rect x="195" y="0" width="1" height="1" fill="#868686"/><rect x="195" y="5" width="1" height="1" fill="#868686"/><rect x="197.5" y="2.5" width="1" height="1" fill="#A0A0A0"/><rect x="200" y="0" width="1" height="1" fill="#868686"/><rect x="200" y="5" width="1" height="1" fill="#868686"/><rect x="202.5" y="2.5" width="1" height="1" fill="#A0A0A0"/><rect x="205" y="0" width="1" height="1" fill="#868686"/><rect x="205" y="5" width="1" height="1" fill="#868686"/><rect x="207.5" y="2.5" width="1" height="1" fill="#A0A0A0"/><rect x="210" y="0" width="1" height="1" fill="#868686"/><rect x="210" y="5" width="1" height="1" fill="#868686"/><rect x="212.5" y="2.5" width="1" height="1" fill="#A0A0A0"/><rect x="215" y="0" width="1" height="1" fill="#868686"/><rect x="215" y="5" width="1" height="1" fill="#868686"/><rect x="217.5" y="2.5" width="1" height="1" fill="#A0A0A0"/><rect x="220" y="0" width="1" height="1" fill="#868686"/><rect x="220" y="5" width="1" height="1" fill="#868686"/><rect x="222.5" y="2.5" width="1" height="1" fill="#A0A0A0"/><rect x="225" y="0" width="1" height="1" fill="#868686"/><rect x="225" y="5" width="1" height="1" fill="#868686"/><rect x="227.5" y="2.5" width="1" height="1" fill="#A0A0A0"/><rect x="230" y="0" width="1" height="1" fill="#868686"/><rect x="230" y="5" width="1" height="1" fill="#868686"/><rect x="232.5" y="2.5" width="1" height="1" fill="#A0A0A0"/><rect x="235" y="0" width="1" height="1" fill="#868686"/><rect x="235" y="5" width="1" height="1" fill="#868686"/><rect x="237.5" y="2.5" width="1" height="1" fill="#A0A0A0"/><rect x="240" y="0" width="1" height="1" fill="#868686"/><rect x="240" y="5" width="1" height="1" fill="#868686"/><rect x="242.5" y="2.5" width="1" height="1" fill="#A0A0A0"/><rect x="245" y="0" width="1" height="1" fill="#868686"/><rect x="245" y="5" width="1" height="1" fill="#868686"/><rect x="247.5" y="2.5" width="1" height="1" fill="#A0A0A0"/><rect x="250" y="0" width="1" height="1" fill="#868686"/><rect x="250" y="5" width="1" height="1" fill="#868686"/><rect x="252.5" y="2.5" width="1" height="1" fill="#A0A0A0"/><rect x="255" y="0" width="1" height="1" fill="#868686"/><rect x="255" y="5" width="1" height="1" fill="#868686"/><rect x="257.5" y="2.5" width="1" height="1" fill="#A0A0A0"/><rect x="260" y="0" width="1" height="1" fill="#868686"/><rect x="260" y="5" width="1" height="1" fill="#868686"/><rect x="262.5" y="2.5" width="1" height="1" fill="#A0A0A0"/><rect x="265" y="0" width="1" height="1" fill="#868686"/><rect x="265" y="5" width="1" height="1" fill="#868686"/><rect x="267.5" y="2.5" width="1" height="1" fill="#A0A0A0"/><rect x="270" y="0" width="1" height="1" fill="#868686"/><rect x="270" y="5" width="1" height="1" fill="#868686"/><rect x="272.5" y="2.5" width="1" height="1" fill="#A0A0A0"/><rect x="275" y="0" width="1" height="1" fill="#868686"/><rect x="275" y="5" width="1" height="1" fill="#868686"/><rect x="277.5" y="2.5" width="1" height="1" fill="#A0A0A0"/><rect x="280" y="0" width="1" height="1" fill="#868686"/><rect x="280" y="5" width="1" height="1" fill="#868686"/><rect x="282.5" y="2.5" width="1" height="1" fill="#A0A0A0"/><rect x="285" y="0" width="1" height="1" fill="#868686"/><rect x="285" y="5" width="1" height="1" fill="#868686"/><rect x="287.5" y="2.5" width="1" height="1" fill="#A0A0A0"/><rect x="290" y="0" width="1" height="1" fill="#868686"/><rect x="290" y="5" width="1" height="1" fill="#868686"/><rect x="292.5" y="2.5" width="1" height="1" fill="#A0A0A0"/><rect x="295" y="0" width="1" height="1" fill="#868686"/><rect x="295" y="5" width="1" height="1" fill="#868686"/><rect x="297.5" y="2.5" width="1" height="1" fill="#A0A0A0"/><rect x="300" y="0" width="1" height="1" fill="#868686"/><rect x="300" y="5" width="1" height="1" fill="#868686"/><rect x="302.5" y="2.5" width="1" height="1" fill="#A0A0A0"/><rect x="305" y="0" width="1" height="1" fill="#868686"/><rect x="305" y="5" width="1" height="1" fill="#868686"/><rect x="307.5" y="2.5" width="1" height="1" fill="#A0A0A0"/><rect x="310" y="0" width="1" height="1" fill="#868686"/><rect x="310" y="5" width="1" height="1" fill="#868686"/><rect x="312.5" y="2.5" width="1" height="1" fill="#A0A0A0"/><rect x="315" y="0" width="1" height="1" fill="#868686"/><rect x="315" y="5" width="1" height="1" fill="#868686"/><rect x="317.5" y="2.5" width="1" height="1" fill="#A0A0A0"/><rect x="320" y="0" width="1" height="1" fill="#868686"/><rect x="320" y="5" width="1" height="1" fill="#868686"/><rect x="322.5" y="2.5" width="1" height="1" fill="#A0A0A0"/><rect x="325" y="0" width="1" height="1" fill="#868686"/><rect x="325" y="5" width="1" height="1" fill="#868686"/><rect x="327.5" y="2.5" width="1" height="1" fill="#A0A0A0"/><rect x="330" y="0" width="1" height="1" fill="#868686"/><rect x="330" y="5" width="1" height="1" fill="#868686"/><rect x="332.5" y="2.5" width="1" height="1" fill="#A0A0A0"/><rect x="335" y="0" width="1" height="1" fill="#868686"/><rect x="335" y="5" width="1" height="1" fill="#868686"/><rect x="337.5" y="2.5" width="1" height="1" fill="#A0A0A0"/><rect x="340" y="0" width="1" height="1" fill="#868686"/><rect x="340" y="5" width="1" height="1" fill="#868686"/><rect x="342.5" y="2.5" width="1" height="1" fill="#A0A0A0"/><rect x="345" y="0" width="1" height="1" fill="#868686"/><rect x="345" y="5" width="1" height="1" fill="#868686"/><rect x="347.5" y="2.5" width="1" height="1" fill="#A0A0A0"/><rect x="350" y="0" width="1" height="1" fill="#868686"/><rect x="350" y="5" width="1" height="1" fill="#868686"/><rect x="352.5" y="2.5" width="1" height="1" fill="#A0A0A0"/><rect x="355" y="0" width="1" height="1" fill="#868686"/><rect x="355" y="5" width="1" height="1" fill="#868686"/><rect x="357.5" y="2.5" width="1" height="1" fill="#A0A0A0"/><rect x="360" y="0" width="1" height="1" fill="#868686"/><rect x="360" y="5" width="1" height="1" fill="#868686"/><rect x="362.5" y="2.5" width="1" height="1" fill="#A0A0A0"/><rect x="365" y="0" width="1" height="1" fill="#868686"/><rect x="365" y="5" width="1" height="1" fill="#868686"/><rect x="367.5" y="2.5" width="1" height="1" fill="#A0A0A0"/><rect x="370" y="0" width="1" height="1" fill="#868686"/><rect x="370" y="5" width="1" height="1" fill="#868686"/><rect x="372.5" y="2.5" width="1" height="1" fill="#A0A0A0"/><rect x="375" y="0" width="1" height="1" fill="#868686"/><rect x="375" y="5" width="1" height="1" fill="#868686"/><rect x="377.5" y="2.5" width="1" height="1" fill="#A0A0A0"/><rect x="380" y="0" width="1" height="1" fill="#868686"/><rect x="380" y="5" width="1" height="1" fill="#868686"/><rect x="382.5" y="2.5" width="1" height="1" fill="#A0A0A0"/><rect x="385" y="0" width="1" height="1" fill="#868686"/><rect x="385" y="5" width="1" height="1" fill="#868686"/><rect x="387.5" y="2.5" width="1" height="1" fill="#A0A0A0"/><rect x="390" y="0" width="1" height="1" fill="#868686"/><rect x="390" y="5" width="1" height="1" fill="#868686"/><rect x="392.5" y="2.5" width="1" height="1" fill="#A0A0A0"/><rect x="395" y="0" width="1" height="1" fill="#868686"/><rect x="395" y="5" width="1" height="1" fill="#868686"/><rect x="397.5" y="2.5" width="1" height="1" fill="#A0A0A0"/><rect x="400" y="0" width="1" height="1" fill="#868686"/><rect x="400" y="5" width="1" height="1" fill="#868686"/><rect x="402.5" y="2.5" width="1" height="1" fill="#A0A0A0"/><rect x="405" y="0" width="1" height="1" fill="#868686"/><rect x="405" y="5" width="1" height="1" fill="#868686"/><rect x="407.5" y="2.5" width="1" height="1" fill="#A0A0A0"/><rect x="410" y="0" width="1" height="1" fill="#868686"/><rect x="410" y="5" width="1" height="1" fill="#868686"/><rect x="412.5" y="2.5" width="1" height="1" fill="#A0A0A0"/><rect x="415" y="0" width="1" height="1" fill="#868686"/><rect x="415" y="5" width="1" height="1" fill="#868686"/><rect x="417.5" y="2.5" width="1" height="1" fill="#A0A0A0"/><rect x="420" y="0" width="1" height="1" fill="#868686"/><rect x="420" y="5" width="1" height="1" fill="#868686"/><rect x="422.5" y="2.5" width="1" height="1" fill="#A0A0A0"/><rect x="425" y="0" width="1" height="1" fill="#868686"/><rect x="425" y="5" width="1" height="1" fill="#868686"/><rect x="427.5" y="2.5" width="1" height="1" fill="#A0A0A0"/><rect x="430" y="0" width="1" height="1" fill="#868686"/><rect x="430" y="5" width="1" height="1" fill="#868686"/><rect x="432.5" y="2.5" width="1" height="1" fill="#A0A0A0"/><rect x="435" y="0" width="1" height="1" fill="#868686"/><rect x="435" y="5" width="1" height="1" fill="#868686"/><rect x="437.5" y="2.5" width="1" height="1" fill="#A0A0A0"/><rect x="440" y="0" width="1" height="1" fill="#868686"/><rect x="440" y="5" width="1" height="1" fill="#868686"/><rect x="442.5" y="2.5" width="1" height="1" fill="#A0A0A0"/><rect x="445" y="0" width="1" height="1" fill="#868686"/><rect x="445" y="5" width="1" height="1" fill="#868686"/><rect x="447.5" y="2.5" width="1" height="1" fill="#A0A0A0"/><rect x="450" y="0" width="1" height="1" fill="#868686"/><rect x="450" y="5" width="1" height="1" fill="#868686"/><rect x="452.5" y="2.5" width="1" height="1" fill="#A0A0A0"/><rect x="455" y="0" width="1" height="1" fill="#868686"/><rect x="455" y="5" width="1" height="1" fill="#868686"/><rect x="457.5" y="2.5" width="1" height="1" fill="#A0A0A0"/><rect x="460" y="0" width="1" height="1" fill="#868686"/><rect x="460" y="5" width="1" height="1" fill="#868686"/><rect x="462.5" y="2.5" width="1" height="1" fill="#A0A0A0"/><rect x="465" y="0" width="1" height="1" fill="#868686"/><rect x="465" y="5" width="1" height="1" fill="#868686"/><rect x="467.5" y="2.5" width="1" height="1" fill="#A0A0A0"/><rect x="470" y="0" width="1" height="1" fill="#868686"/><rect x="470" y="5" width="1" height="1" fill="#868686"/><rect x="472.5" y="2.5" width="1" height="1" fill="#A0A0A0"/><rect x="475" y="0" width="1" height="1" fill="#868686"/><rect x="475" y="5" width="1" height="1" fill="#868686"/><rect x="477.5" y="2.5" width="1" height="1" fill="#A0A0A0"/><rect x="480" y="0" width="1" height="1" fill="#868686"/><rect x="480" y="5" width="1" height="1" fill="#868686"/><rect x="482.5" y="2.5" width="1" height="1" fill="#A0A0A0"/><rect x="485" y="0" width="1" height="1" fill="#868686"/><rect x="485" y="5" width="1" height="1" fill="#868686"/><rect x="487.5" y="2.5" width="1" height="1" fill="#A0A0A0"/><rect x="490" y="0" width="1" height="1" fill="#868686"/><rect x="490" y="5" width="1" height="1" fill="#868686"/><rect x="492.5" y="2.5" width="1" height="1" fill="#A0A0A0"/><rect x="495" y="0" width="1" height="1" fill="#868686"/><rect x="495" y="5" width="1" height="1" fill="#868686"/><rect x="497.5" y="2.5" width="1" height="1" fill="#A0A0A0"/><rect x="500" y="0" width="1" height="1" fill="#868686"/><rect x="500" y="5" width="1" height="1" fill="#868686"/><rect x="502.5" y="2.5" width="1" height="1" fill="#A0A0A0"/><rect x="505" y="0" width="1" height="1" fill="#868686"/><rect x="505" y="5" width="1" height="1" fill="#868686"/><rect x="507.5" y="2.5" width="1" height="1" fill="#A0A0A0"/><rect x="510" y="0" width="1" height="1" fill="#868686"/><rect x="510" y="5" width="1" height="1" fill="#868686"/><rect x="512.5" y="2.5" width="1" height="1" fill="#A0A0A0"/><rect x="515" y="0" width="1" height="1" fill="#868686"/><rect x="515" y="5" width="1" height="1" fill="#868686"/><rect x="517.5" y="2.5" width="1" height="1" fill="#A0A0A0"/><rect x="520" y="0" width="1" height="1" fill="#868686"/><rect x="520" y="5" width="1" height="1" fill="#868686"/><rect x="522.5" y="2.5" width="1" height="1" fill="#A0A0A0"/><rect x="525" y="0" width="1" height="1" fill="#868686"/><rect x="525" y="5" width="1" height="1" fill="#868686"/><rect x="527.5" y="2.5" width="1" height="1" fill="#A0A0A0"/><rect x="530" y="0" width="1" height="1" fill="#868686"/><rect x="530" y="5" width="1" height="1" fill="#868686"/><rect x="532.5" y="2.5" width="1" height="1" fill="#A0A0A0"/><rect x="535" y="0" width="1" height="1" fill="#868686"/><rect x="535" y="5" width="1" height="1" fill="#868686"/><rect x="537.5" y="2.5" width="1" height="1" fill="#A0A0A0"/><rect x="540" y="0" width="1" height="1" fill="#868686"/><rect x="540" y="5" width="1" height="1" fill="#868686"/><rect x="542.5" y="2.5" width="1" height="1" fill="#A0A0A0"/><rect x="545" y="0" width="1" height="1" fill="#868686"/><rect x="545" y="5" width="1" height="1" fill="#868686"/><rect x="547.5" y="2.5" width="1" height="1" fill="#A0A0A0"/><rect x="550" y="0" width="1" height="1" fill="#868686"/><rect x="550" y="5" width="1" height="1" fill="#868686"/><rect x="552.5" y="2.5" width="1" height="1" fill="#A0A0A0"/><rect x="555" y="0" width="1" height="1" fill="#868686"/><rect x="555" y="5" width="1" height="1" fill="#868686"/><rect x="557.5" y="2.5" width="1" height="1" fill="#A0A0A0"/><rect x="560" y="0" width="1" height="1" fill="#868686"/><rect x="560" y="5" width="1" height="1" fill="#868686"/><rect x="562.5" y="2.5" width="1" height="1" fill="#A0A0A0"/><rect x="565" y="0" width="1" height="1" fill="#868686"/><rect x="565" y="5" width="1" height="1" fill="#868686"/><rect x="567.5" y="2.5" width="1" height="1" fill="#A0A0A0"/><rect x="570" y="0" width="1" height="1" fill="#868686"/><rect x="570" y="5" width="1" height="1" fill="#868686"/><rect x="572.5" y="2.5" width="1" height="1" fill="#A0A0A0"/><rect x="575" y="0" width="1" height="1" fill="#868686"/><rect x="575" y="5" width="1" height="1" fill="#868686"/><rect x="577.5" y="2.5" width="1" height="1" fill="#A0A0A0"/><rect x="580" y="0" width="1" height="1" fill="#868686"/><rect x="580" y="5" width="1" height="1" fill="#868686"/><rect x="582.5" y="2.5" width="1" height="1" fill="#A0A0A0"/><rect x="585" y="0" width="1" height="1" fill="#868686"/><rect x="585" y="5" width="1" height="1" fill="#868686"/><rect x="587.5" y="2.5" width="1" height="1" fill="#A0A0A0"/><rect x="590" y="0" width="1" height="1" fill="#868686"/><rect x="590" y="5" width="1" height="1" fill="#868686"/><rect x="592.5" y="2.5" width="1" height="1" fill="#A0A0A0"/><rect x="595" y="0" width="1" height="1" fill="#868686"/><rect x="595" y="5" width="1" height="1" fill="#868686"/><rect x="597.5" y="2.5" width="1" height="1" fill="#A0A0A0"/><rect x="600" y="0" width="1" height="1" fill="#868686"/><rect x="600" y="5" width="1" height="1" fill="#868686"/><rect x="602.5" y="2.5" width="1" height="1" fill="#A0A0A0"/><rect x="605" y="0" width="1" height="1" fill="#868686"/><rect x="605" y="5" width="1" height="1" fill="#868686"/><rect x="607.5" y="2.5" width="1" height="1" fill="#A0A0A0"/><rect x="610" y="0" width="1" height="1" fill="#868686"/><rect x="610" y="5" width="1" height="1" fill="#868686"/><rect x="612.5" y="2.5" width="1" height="1" fill="#A0A0A0"/><rect x="615" y="0" width="1" height="1" fill="#868686"/><rect x="615" y="5" width="1" height="1" fill="#868686"/><rect x="617.5" y="2.5" width="1" height="1" fill="#A0A0A0"/><rect x="620" y="0" width="1" height="1" fill="#868686"/><rect x="620" y="5" width="1" height="1" fill="#868686"/><rect x="622.5" y="2.5" width="1" height="1" fill="#A0A0A0"/><rect x="625" y="0" width="1" height="1" fill="#868686"/><rect x="625" y="5" width="1" height="1" fill="#868686"/><rect x="627.5" y="2.5" width="1" height="1" fill="#A0A0A0"/><rect x="630" y="0" width="1" height="1" fill="#868686"/><rect x="630" y="5" width="1" height="1" fill="#868686"/><rect x="632.5" y="2.5" width="1" height="1" fill="#A0A0A0"/><rect x="635" y="0" width="1" height="1" fill="#868686"/><rect x="635" y="5" width="1" height="1" fill="#868686"/><rect x="637.5" y="2.5" width="1" height="1" fill="#A0A0A0"/><rect x="640" y="0" width="1" height="1" fill="#868686"/><rect x="640" y="5" width="1" height="1" fill="#868686"/><rect x="642.5" y="2.5" width="1" height="1" fill="#A0A0A0"/><rect x="645" y="0" width="1" height="1" fill="#868686"/><rect x="645" y="5" width="1" height="1" fill="#868686"/><rect x="647.5" y="2.5" width="1" height="1" fill="#A0A0A0"/><rect x="650" y="0" width="1" height="1" fill="#868686"/><rect x="650" y="5" width="1" height="1" fill="#868686"/><rect x="652.5" y="2.5" width="1" height="1" fill="#A0A0A0"/><rect x="655" y="0" width="1" height="1" fill="#868686"/><rect x="655" y="5" width="1" height="1" fill="#868686"/><rect x="657.5" y="2.5" width="1" height="1" fill="#A0A0A0"/><rect x="660" y="0" width="1" height="1" fill="#868686"/><rect x="660" y="5" width="1" height="1" fill="#868686"/><rect x="662.5" y="2.5" width="1" height="1" fill="#A0A0A0"/><rect x="665" y="0" width="1" height="1" fill="#868686"/><rect x="665" y="5" width="1" height="1" fill="#868686"/><rect x="667.5" y="2.5" width="1" height="1" fill="#A0A0A0"/><rect x="670" y="0" width="1" height="1" fill="#868686"/><rect x="670" y="5" width="1" height="1" fill="#868686"/><rect x="672.5" y="2.5" width="1" height="1" fill="#A0A0A0"/><rect x="675" y="0" width="1" height="1" fill="#868686"/><rect x="675" y="5" width="1" height="1" fill="#868686"/><rect x="677.5" y="2.5" width="1" height="1" fill="#A0A0A0"/><rect x="680" y="0" width="1" height="1" fill="#868686"/><rect x="680" y="5" width="1" height="1" fill="#868686"/><rect x="682.5" y="2.5" width="1" height="1" fill="#A0A0A0"/><rect x="685" y="0" width="1" height="1" fill="#868686"/><rect x="685" y="5" width="1" height="1" fill="#868686"/><rect x="687.5" y="2.5" width="1" height="1" fill="#A0A0A0"/><rect x="690" y="0" width="1" height="1" fill="#868686"/><rect x="690" y="5" width="1" height="1" fill="#868686"/><rect x="692.5" y="2.5" width="1" height="1" fill="#A0A0A0"/><rect x="695" y="0" width="1" height="1" fill="#868686"/><rect x="695" y="5" width="1" height="1" fill="#868686"/><rect x="697.5" y="2.5" width="1" height="1" fill="#A0A0A0"/><rect x="700" y="0" width="1" height="1" fill="#868686"/><rect x="700" y="5" width="1" height="1" fill="#868686"/><rect x="702.5" y="2.5" width="1" height="1" fill="#A0A0A0"/><rect x="705" y="0" width="1" height="1" fill="#868686"/><rect x="705" y="5" width="1" height="1" fill="#868686"/><rect x="707.5" y="2.5" width="1" height="1" fill="#A0A0A0"/><rect x="710" y="0" width="1" height="1" fill="#868686"/><rect x="710" y="5" width="1" height="1" fill="#868686"/><rect x="712.5" y="2.5" width="1" height="1" fill="#A0A0A0"/><rect x="715" y="0" width="1" height="1" fill="#868686"/><rect x="715" y="5" width="1" height="1" fill="#868686"/><rect x="717.5" y="2.5" width="1" height="1" fill="#A0A0A0"/><rect x="720" y="0" width="1" height="1" fill="#868686"/><rect x="720" y="5" width="1" height="1" fill="#868686"/><rect x="722.5" y="2.5" width="1" height="1" fill="#A0A0A0"/><rect x="725" y="0" width="1" height="1" fill="#868686"/><rect x="725" y="5" width="1" height="1" fill="#868686"/><rect x="727.5" y="2.5" width="1" height="1" fill="#A0A0A0"/><rect x="730" y="0" width="1" height="1" fill="#868686"/><rect x="730" y="5" width="1" height="1" fill="#868686"/><rect x="732.5" y="2.5" width="1" height="1" fill="#A0A0A0"/><rect x="735" y="0" width="1" height="1" fill="#868686"/><rect x="735" y="5" width="1" height="1" fill="#868686"/><rect x="737.5" y="2.5" width="1" height="1" fill="#A0A0A0"/><rect x="740" y="0" width="1" height="1" fill="#868686"/><rect x="740" y="5" width="1" height="1" fill="#868686"/><rect x="742.5" y="2.5" width="1" height="1" fill="#A0A0A0"/><rect x="745" y="0" width="1" height="1" fill="#868686"/><rect x="745" y="5" width="1" height="1" fill="#868686"/><rect x="747.5" y="2.5" width="1" height="1" fill="#A0A0A0"/><rect x="750" y="0" width="1" height="1" fill="#868686"/><rect x="750" y="5" width="1" height="1" fill="#868686"/><rect x="752.5" y="2.5" width="1" height="1" fill="#A0A0A0"/><rect x="755" y="0" width="1" height="1" fill="#868686"/><rect x="755" y="5" width="1" height="1" fill="#868686"/><rect x="757.5" y="2.5" width="1" height="1" fill="#A0A0A0"/><rect x="760" y="0" width="1" height="1" fill="#868686"/><rect x="760" y="5" width="1" height="1" fill="#868686"/><rect x="762.5" y="2.5" width="1" height="1" fill="#A0A0A0"/><rect x="765" y="0" width="1" height="1" fill="#868686"/><rect x="765" y="5" width="1" height="1" fill="#868686"/><rect x="767.5" y="2.5" width="1" height="1" fill="#A0A0A0"/><rect x="770" y="0" width="1" height="1" fill="#868686"/><rect x="770" y="5" width="1" height="1" fill="#868686"/><rect x="772.5" y="2.5" width="1" height="1" fill="#A0A0A0"/><rect x="775" y="0" width="1" height="1" fill="#868686"/><rect x="775" y="5" width="1" height="1" fill="#868686"/><rect x="777.5" y="2.5" width="1" height="1" fill="#A0A0A0"/><rect x="780" y="0" width="1" height="1" fill="#868686"/><rect x="780" y="5" width="1" height="1" fill="#868686"/><rect x="782.5" y="2.5" width="1" height="1" fill="#A0A0A0"/><rect x="785" y="0" width="1" height="1" fill="#868686"/><rect x="785" y="5" width="1" height="1" fill="#868686"/><rect x="787.5" y="2.5" width="1" height="1" fill="#A0A0A0"/><rect x="790" y="0" width="1" height="1" fill="#868686"/><rect x="790" y="5" width="1" height="1" fill="#868686"/><rect x="792.5" y="2.5" width="1" height="1" fill="#A0A0A0"/><rect x="795" y="0" width="1" height="1" fill="#868686"/><rect x="795" y="5" width="1" height="1" fill="#868686"/><rect x="797.5" y="2.5" width="1" height="1" fill="#A0A0A0"/><rect x="800" y="0" width="1" height="1" fill="#868686"/><rect x="800" y="5" width="1" height="1" fill="#868686"/><rect x="802.5" y="2.5" width="1" height="1" fill="#A0A0A0"/><rect x="805" y="0" width="1" height="1" fill="#868686"/><rect x="805" y="5" width="1" height="1" fill="#868686"/><rect x="807.5" y="2.5" width="1" height="1" fill="#A0A0A0"/><rect x="810" y="0" width="1" height="1" fill="#868686"/><rect x="810" y="5" width="1" height="1" fill="#868686"/><rect x="812.5" y="2.5" width="1" height="1" fill="#A0A0A0"/><rect x="815" y="0" width="1" height="1" fill="#868686"/><rect x="815" y="5" width="1" height="1" fill="#868686"/><rect x="817.5" y="2.5" width="1" height="1" fill="#A0A0A0"/><rect x="820" y="0" width="1" height="1" fill="#868686"/><rect x="820" y="5" width="1" height="1" fill="#868686"/><rect x="822.5" y="2.5" width="1" height="1" fill="#A0A0A0"/><rect x="825" y="0" width="1" height="1" fill="#868686"/><rect x="825" y="5" width="1" height="1" fill="#868686"/><rect x="827.5" y="2.5" width="1" height="1" fill="#A0A0A0"/><rect x="830" y="0" width="1" height="1" fill="#868686"/><rect x="830" y="5" width="1" height="1" fill="#868686"/><rect x="832.5" y="2.5" width="1" height="1" fill="#A0A0A0"/><rect x="835" y="0" width="1" height="1" fill="#868686"/><rect x="835" y="5" width="1" height="1" fill="#868686"/><rect x="837.5" y="2.5" width="1" height="1" fill="#A0A0A0"/><rect x="840" y="0" width="1" height="1" fill="#868686"/><rect x="840" y="5" width="1" height="1" fill="#868686"/><rect x="842.5" y="2.5" width="1" height="1" fill="#A0A0A0"/><rect x="845" y="0" width="1" height="1" fill="#868686"/><rect x="845" y="5" width="1" height="1" fill="#868686"/><rect x="847.5" y="2.5" width="1" height="1" fill="#A0A0A0"/><rect x="850" y="0" width="1" height="1" fill="#868686"/><rect x="850" y="5" width="1" height="1" fill="#868686"/><rect x="852.5" y="2.5" width="1" height="1" fill="#A0A0A0"/><rect x="855" y="0" width="1" height="1" fill="#868686"/><rect x="855" y="5" width="1" height="1" fill="#868686"/><rect x="857.5" y="2.5" width="1" height="1" fill="#A0A0A0"/><rect x="860" y="0" width="1" height="1" fill="#868686"/><rect x="860" y="5" width="1" height="1" fill="#868686"/><rect x="862.5" y="2.5" width="1" height="1" fill="#A0A0A0"/><rect x="865" y="0" width="1" height="1" fill="#868686"/><rect x="865" y="5" width="1" height="1" fill="#868686"/><rect x="867.5" y="2.5" width="1" height="1" fill="#A0A0A0"/><rect x="870" y="0" width="1" height="1" fill="#868686"/><rect x="870" y="5" width="1" height="1" fill="#868686"/><rect x="872.5" y="2.5" width="1" height="1" fill="#A0A0A0"/><rect x="875" y="0" width="1" height="1" fill="#868686"/><rect x="875" y="5" width="1" height="1" fill="#868686"/><rect x="877.5" y="2.5" width="1" height="1" fill="#A0A0A0"/><rect x="880" y="0" width="1" height="1" fill="#868686"/><rect x="880" y="5" width="1" height="1" fill="#868686"/><rect x="882.5" y="2.5" width="1" height="1" fill="#A0A0A0"/><rect x="885" y="0" width="1" height="1" fill="#868686"/><rect x="885" y="5" width="1" height="1" fill="#868686"/><rect x="887.5" y="2.5" width="1" height="1" fill="#A0A0A0"/><rect x="890" y="0" width="1" height="1" fill="#868686"/><rect x="890" y="5" width="1" height="1" fill="#868686"/><rect x="892.5" y="2.5" width="1" height="1" fill="#A0A0A0"/><rect x="895" y="0" width="1" height="1" fill="#868686"/><rect x="895" y="5" width="1" height="1" fill="#868686"/><rect x="897.5" y="2.5" width="1" height="1" fill="#A0A0A0"/><rect x="900" y="0" width="1" height="1" fill="#868686"/><rect x="900" y="5" width="1" height="1" fill="#868686"/><rect x="902.5" y="2.5" width="1" height="1" fill="#A0A0A0"/><rect x="905" y="0" width="1" height="1" fill="#868686"/><rect x="905" y="5" width="1" height="1" fill="#868686"/><rect x="907.5" y="2.5" width="1" height="1" fill="#A0A0A0"/><rect x="910" y="0" width="1" height="1" fill="#868686"/><rect x="910" y="5" width="1" height="1" fill="#868686"/><rect x="912.5" y="2.5" width="1" height="1" fill="#A0A0A0"/><rect x="915" y="0" width="1" height="1" fill="#868686"/><rect x="915" y="5" width="1" height="1" fill="#868686"/><rect x="917.5" y="2.5" width="1" height="1" fill="#A0A0A0"/><rect x="920" y="0" width="1" height="1" fill="#868686"/><rect x="920" y="5" width="1" height="1" fill="#868686"/><rect x="922.5" y="2.5" width="1" height="1" fill="#A0A0A0"/><rect x="925" y="0" width="1" height="1" fill="#868686"/><rect x="925" y="5" width="1" height="1" fill="#868686"/><rect x="927.5" y="2.5" width="1" height="1" fill="#A0A0A0"/><rect x="930" y="0" width="1" height="1" fill="#868686"/><rect x="930" y="5" width="1" height="1" fill="#868686"/><rect x="932.5" y="2.5" width="1" height="1" fill="#A0A0A0"/><rect x="935" y="0" width="1" height="1" fill="#868686"/><rect x="935" y="5" width="1" height="1" fill="#868686"/><rect x="937.5" y="2.5" width="1" height="1" fill="#A0A0A0"/><rect x="940" y="0" width="1" height="1" fill="#868686"/><rect x="940" y="5" width="1" height="1" fill="#868686"/><rect x="942.5" y="2.5" width="1" height="1" fill="#A0A0A0"/><rect x="945" y="0" width="1" height="1" fill="#868686"/><rect x="945" y="5" width="1" height="1" fill="#868686"/><rect x="947.5" y="2.5" width="1" height="1" fill="#A0A0A0"/><rect x="950" y="0" width="1" height="1" fill="#868686"/><rect x="950" y="5" width="1" height="1" fill="#868686"/><rect x="952.5" y="2.5" width="1" height="1" fill="#A0A0A0"/><rect x="955" y="0" width="1" height="1" fill="#868686"/><rect x="955" y="5" width="1" height="1" fill="#868686"/><rect x="957.5" y="2.5" width="1" height="1" fill="#A0A0A0"/><rect x="960" y="0" width="1" height="1" fill="#868686"/><rect x="960" y="5" width="1" height="1" fill="#868686"/><rect x="962.5" y="2.5" width="1" height="1" fill="#A0A0A0"/><rect x="965" y="0" width="1" height="1" fill="#868686"/><rect x="965" y="5" width="1" height="1" fill="#868686"/><rect x="967.5" y="2.5" width="1" height="1" fill="#A0A0A0"/><rect x="970" y="0" width="1" height="1" fill="#868686"/><rect x="970" y="5" width="1" height="1" fill="#868686"/><rect x="972.5" y="2.5" width="1" height="1" fill="#A0A0A0"/><rect x="975" y="0" width="1" height="1" fill="#868686"/><rect x="975" y="5" width="1" height="1" fill="#868686"/><rect x="977.5" y="2.5" width="1" height="1" fill="#A0A0A0"/><rect x="980" y="0" width="1" height="1" fill="#868686"/><rect x="980" y="5" width="1" height="1" fill="#868686"/><rect x="982.5" y="2.5" width="1" height="1" fill="#A0A0A0"/><rect x="985" y="0" width="1" height="1" fill="#868686"/><rect x="985" y="5" width="1" height="1" fill="#868686"/><rect x="987.5" y="2.5" width="1" height="1" fill="#A0A0A0"/><rect x="990" y="0" width="1" height="1" fill="#868686"/><rect x="990" y="5" width="1" height="1" fill="#868686"/><rect x="992.5" y="2.5" width="1" height="1" fill="#A0A0A0"/><rect x="995" y="0" width="1" height="1" fill="#868686"/><rect x="995" y="5" width="1" height="1" fill="#868686"/><rect x="997.5" y="2.5" width="1" height="1" fill="#A0A0A0"/><rect x="1000" y="0" width="1" height="1" fill="#868686"/><rect x="1000" y="5" width="1" height="1" fill="#868686"/><rect x="1002.5" y="2.5" width="1" height="1" fill="#A0A0A0"/><rect x="1005" y="0" width="1" height="1" fill="#868686"/><rect x="1005" y="5" width="1" height="1" fill="#868686"/><rect x="1007.5" y="2.5" width="1" height="1" fill="#A0A0A0"/><rect x="1010" y="0" width="1" height="1" fill="#868686"/><rect x="1010" y="5" width="1" height="1" fill="#868686"/><rect x="1012.5" y="2.5" width="1" height="1" fill="#A0A0A0"/><rect x="1015" y="0" width="1" height="1" fill="#868686"/><rect x="1015" y="5" width="1" height="1" fill="#868686"/><rect x="1017.5" y="2.5" width="1" height="1" fill="#A0A0A0"/><rect x="1020" y="0" width="1" height="1" fill="#868686"/><rect x="1020" y="5" width="1" height="1" fill="#868686"/><rect x="1022.5" y="2.5" width="1" height="1" fill="#A0A0A0"/><rect x="1025" y="0" width="1" height="1" fill="#868686"/><rect x="1025" y="5" width="1" height="1" fill="#868686"/><rect x="1027.5" y="2.5" width="1" height="1" fill="#A0A0A0"/><rect x="1030" y="0" width="1" height="1" fill="#868686"/><rect x="1030" y="5" width="1" height="1" fill="#868686"/><rect x="1032.5" y="2.5" width="1" height="1" fill="#A0A0A0"/><rect x="1035" y="0" width="1" height="1" fill="#868686"/><rect x="1035" y="5" width="1" height="1" fill="#868686"/><rect x="1037.5" y="2.5" width="1" height="1" fill="#A0A0A0"/><rect x="1040" y="0" width="1" height="1" fill="#868686"/><rect x="1040" y="5" width="1" height="1" fill="#868686"/><rect x="1042.5" y="2.5" width="1" height="1" fill="#A0A0A0"/><rect x="1045" y="0" width="1" height="1" fill="#868686"/><rect x="1045" y="5" width="1" height="1" fill="#868686"/><rect x="1047.5" y="2.5" width="1" height="1" fill="#A0A0A0"/><rect x="1050" y="0" width="1" height="1" fill="#868686"/><rect x="1050" y="5" width="1" height="1" fill="#868686"/><rect x="1052.5" y="2.5" width="1" height="1" fill="#A0A0A0"/><rect x="1055" y="0" width="1" height="1" fill="#868686"/><rect x="1055" y="5" width="1" height="1" fill="#868686"/><rect x="1057.5" y="2.5" width="1" height="1" fill="#A0A0A0"/><rect x="1060" y="0" width="1" height="1" fill="#868686"/><rect x="1060" y="5" width="1" height="1" fill="#868686"/><rect x="1062.5" y="2.5" width="1" height="1" fill="#A0A0A0"/><rect x="1065" y="0" width="1" height="1" fill="#868686"/><rect x="1065" y="5" width="1" height="1" fill="#868686"/><rect x="1067.5" y="2.5" width="1" height="1" fill="#A0A0A0"/><rect x="1070" y="0" width="1" height="1" fill="#868686"/><rect x="1070" y="5" width="1" height="1" fill="#868686"/><rect x="1072.5" y="2.5" width="1" height="1" fill="#A0A0A0"/><rect x="1075" y="0" width="1" height="1" fill="#868686"/><rect x="1075" y="5" width="1" height="1" fill="#868686"/><rect x="1077.5" y="2.5" width="1" height="1" fill="#A0A0A0"/><rect x="1080" y="0" width="1" height="1" fill="#868686"/><rect x="1080" y="5" width="1" height="1" fill="#868686"/><rect x="1082.5" y="2.5" width="1" height="1" fill="#A0A0A0"/><rect x="1085" y="0" width="1" height="1" fill="#868686"/><rect x="1085" y="5" width="1" height="1" fill="#868686"/><rect x="1087.5" y="2.5" width="1" height="1" fill="#A0A0A0"/><rect x="1090" y="0" width="1" height="1" fill="#868686"/><rect x="1090" y="5" width="1" height="1" fill="#868686"/><rect x="1092.5" y="2.5" width="1" height="1" fill="#A0A0A0"/><rect x="1095" y="0" width="1" height="1" fill="#868686"/><rect x="1095" y="5" width="1" height="1" fill="#868686"/><rect x="1097.5" y="2.5" width="1" height="1" fill="#A0A0A0"/><rect x="1100" y="0" width="1" height="1" fill="#868686"/><rect x="1100" y="5" width="1" height="1" fill="#868686"/><rect x="1102.5" y="2.5" width="1" height="1" fill="#A0A0A0"/><rect x="1105" y="0" width="1" height="1" fill="#868686"/><rect x="1105" y="5" width="1" height="1" fill="#868686"/><rect x="1107.5" y="2.5" width="1" height="1" fill="#A0A0A0"/><rect x="1110" y="0" width="1" height="1" fill="#868686"/><rect x="1110" y="5" width="1" height="1" fill="#868686"/><rect x="1112.5" y="2.5" width="1" height="1" fill="#A0A0A0"/><rect x="1115" y="0" width="1" height="1" fill="#868686"/><rect x="1115" y="5" width="1" height="1" fill="#868686"/><rect x="1117.5" y="2.5" width="1" height="1" fill="#A0A0A0"/><rect x="1120" y="0" width="1" height="1" fill="#868686"/><rect x="1120" y="5" width="1" height="1" fill="#868686"/><rect x="1122.5" y="2.5" width="1" height="1" fill="#A0A0A0"/><rect x="1125" y="0" width="1" height="1" fill="#868686"/><rect x="1125" y="5" width="1" height="1" fill="#868686"/><rect x="1127.5" y="2.5" width="1" height="1" fill="#A0A0A0"/><rect x="1130" y="0" width="1" height="1" fill="#868686"/><rect x="1130" y="5" width="1" height="1" fill="#868686"/><rect x="1132.5" y="2.5" width="1" height="1" fill="#A0A0A0"/><rect x="1135" y="0" width="1" height="1" fill="#868686"/><rect x="1135" y="5" width="1" height="1" fill="#868686"/><rect x="1137.5" y="2.5" width="1" height="1" fill="#A0A0A0"/><rect x="1140" y="0" width="1" height="1" fill="#868686"/><rect x="1140" y="5" width="1" height="1" fill="#868686"/><rect x="1142.5" y="2.5" width="1" height="1" fill="#A0A0A0"/><rect x="1145" y="0" width="1" height="1" fill="#868686"/><rect x="1145" y="5" width="1" height="1" fill="#868686"/><rect x="1147.5" y="2.5" width="1" height="1" fill="#A0A0A0"/><rect x="1150" y="0" width="1" height="1" fill="#868686"/><rect x="1150" y="5" width="1" height="1" fill="#868686"/><rect x="1152.5" y="2.5" width="1" height="1" fill="#A0A0A0"/><rect x="1155" y="0" width="1" height="1" fill="#868686"/><rect x="1155" y="5" width="1" height="1" fill="#868686"/><rect x="1157.5" y="2.5" width="1" height="1" fill="#A0A0A0"/><rect x="1160" y="0" width="1" height="1" fill="#868686"/><rect x="1160" y="5" width="1" height="1" fill="#868686"/><rect x="1162.5" y="2.5" width="1" height="1" fill="#A0A0A0"/><rect x="1165" y="0" width="1" height="1" fill="#868686"/><rect x="1165" y="5" width="1" height="1" fill="#868686"/><rect x="1167.5" y="2.5" width="1" height="1" fill="#A0A0A0"/><rect x="1170" y="0" width="1" height="1" fill="#868686"/><rect x="1170" y="5" width="1" height="1" fill="#868686"/><rect x="1172.5" y="2.5" width="1" height="1" fill="#A0A0A0"/><rect x="1175" y="0" width="1" height="1" fill="#868686"/><rect x="1175" y="5" width="1" height="1" fill="#868686"/><rect x="1177.5" y="2.5" width="1" height="1" fill="#A0A0A0"/><rect x="1180" y="0" width="1" height="1" fill="#868686"/><rect x="1180" y="5" width="1" height="1" fill="#868686"/><rect x="1182.5" y="2.5" width="1" height="1" fill="#A0A0A0"/><rect x="1185" y="0" width="1" height="1" fill="#868686"/><rect x="1185" y="5" width="1" height="1" fill="#868686"/><rect x="1187.5" y="2.5" width="1" height="1" fill="#A0A0A0"/><rect x="1190" y="0" width="1" height="1" fill="#868686"/><rect x="1190" y="5" width="1" height="1" fill="#868686"/><rect x="1192.5" y="2.5" width="1" height="1" fill="#A0A0A0"/><rect x="1195" y="0" width="1" height="1" fill="#868686"/><rect x="1195" y="5" width="1" height="1" fill="#868686"/><rect x="1197.5" y="2.5" width="1" height="1" fill="#A0A0A0"/><rect x="1200" y="0" width="1" height="1" fill="#868686"/><rect x="1200" y="5" width="1" height="1" fill="#868686"/><rect x="1202.5" y="2.5" width="1" height="1" fill="#A0A0A0"/><rect x="1205" y="0" width="1" height="1" fill="#868686"/><rect x="1205" y="5" width="1" height="1" fill="#868686"/><rect x="1207.5" y="2.5" width="1" height="1" fill="#A0A0A0"/><rect x="1210" y="0" width="1" height="1" fill="#868686"/><rect x="1210" y="5" width="1" height="1" fill="#868686"/></svg>
<svg class="a" style="left:1375px;top:764px" width="10" height="6" viewBox="0 0 10 6"><path d="M0 0 H10 L5 6 Z" fill="#1E1E1E"/></svg>
<svg class="a" style="left:1395px;top:760px" width="11" height="14" viewBox="0 0 11 14"><path d="M2.5 0.5 H8.5 M3.5 0.5 V7.5 M7 0.5 V7.5 M0.5 7.5 H10.5 M5.5 7.5 V13.5" fill="none" stroke="#1E1E1E" stroke-width="1.5"/></svg>
<svg class="a" style="left:1416px;top:761px" width="12" height="12" viewBox="0 0 12 12"><path d="M1 1 L11 11 M11 1 L1 11" stroke="#1E1E1E" stroke-width="1.6"/></svg>

<div class="a" style="left:50px;top:785px;width:188px;height:24px;background:#fff;border:1px solid #CCCEDB"></div>
<div class="t" style="left:55.5px;top:787px;transform:scaleX(0.941)">Toda la solución</div>
<svg class="a" style="left:224px;top:795px" width="8" height="4" viewBox="0 0 8 4"><path d="M0 0 H8 L4 4 Z" fill="#717171"/></svg>
<div class="a" style="left:246px;top:785px;width:1px;height:22px;background:#CCCEDB"></div>
<div class="a" style="left:252px;top:783px;width:96px;height:27px;border:1px solid #3399FF;background:#EEEEF2"></div>
<svg class="a" style="left:255px;top:786px" width="20" height="20" viewBox="0 0 20 20"><circle cx="10" cy="10" r="9" fill="#E51400"/><path d="M5.4 5.4 L14.6 14.6 M14.6 5.4 L5.4 14.6" stroke="#fff" stroke-width="2.6"/></svg>
<div class="t" style="left:280.5px;top:787px;transform:scaleX(0.881)">0 Errores</div>
<div class="a" style="left:352px;top:785px;width:1px;height:22px;background:#CCCEDB"></div>
<div class="a" style="left:358px;top:783px;width:135px;height:27px;border:1px solid #3399FF;background:#EEEEF2"></div>
<svg class="a" style="left:362px;top:787px" width="17" height="17" viewBox="0 0 17 17"><path d="M8.5 0.5 L16.5 16 H0.5 Z" fill="#FFCC00"/><path d="M8.5 5 V11" stroke="#1E1E1E" stroke-width="2"/><rect x="7.5" y="12.5" width="2" height="2" fill="#1E1E1E"/></svg>
<div class="t" style="left:387.1px;top:787px;transform:scaleX(0.913)">0 Advertencias</div>
<div class="a" style="left:497px;top:785px;width:1px;height:22px;background:#CCCEDB"></div>
<svg class="a" style="left:507px;top:787px" width="18" height="18" viewBox="0 0 18 18"><circle cx="9" cy="9" r="8.5" fill="#1BA1E2"/><rect x="7.8" y="7.5" width="2.4" height="7" fill="#fff"/><circle cx="9" cy="4.8" r="1.4" fill="#fff"/></svg>
<div class="t" style="left:531.9px;top:787px;transform:scaleX(0.902)">0 de 7 Mensajes</div>
<div class="a" style="left:651px;top:785px;width:1px;height:22px;background:#CCCEDB"></div>
<div class="a" style="left:657px;top:783px;width:27px;height:27px;border:1px solid #3399FF;background:#EEEEF2"></div>
<svg class="a" style="left:661px;top:787px" width="19" height="19" viewBox="0 0 19 19"><path d="M1.2 1.2 L6.8 6.8 M6.8 1.2 L1.2 6.8" stroke="#A1260D" stroke-width="2"/><path d="M6.5 7 H16.5 L12.8 11.5 V17.5 H10.2 V11.5 Z" fill="#424242"/></svg>
<div class="a" style="left:688px;top:785px;width:1px;height:22px;background:#CCCEDB"></div>
<div class="a" style="left:698px;top:784px;width:188px;height:25px;background:#fff;border:1px solid #CCCEDB"></div>
<div class="t" style="left:703.4px;top:787px;transform:scaleX(0.945)">Compilación + IntelliSen</div>
<svg class="a" style="left:873px;top:795px" width="8" height="4" viewBox="0 0 8 4"><path d="M0 0 H8 L4 4 Z" fill="#717171"/></svg>

<div class="a" style="left:1187px;top:782px;width:250px;height:27px;background:#fff;border:1px solid #CCCEDB"></div>
<div class="t" style="left:1192.3px;top:787px;color:#717171;transform:scaleX(0.918)">Lista de errores de búsqueda</div>
<svg class="a" style="left:1403px;top:787px" width="17" height="17" viewBox="0 0 17 17"><circle cx="10.5" cy="6.5" r="4.3" fill="none" stroke="#424242" stroke-width="1.8"/><path d="M7.5 9.5 L2 15" stroke="#424242" stroke-width="2.4" stroke-linecap="round"/></svg>
<svg class="a" style="left:1425px;top:795px" width="8" height="4" viewBox="0 0 8 4"><path d="M0 0 H8 L4 4 Z" fill="#717171"/></svg>

<!-- header -->
<div class="a" style="left:44px;top:840px;width:1391px;height:1px;background:#D9DBE5"></div>
<div class="a" style="left:74px;top:814px;width:1px;height:26px;background:#CCCEDB"></div>
<div class="a" style="left:107px;top:814px;width:1px;height:26px;background:#CCCEDB"></div>
<div class="a" style="left:169px;top:814px;width:1px;height:26px;background:#CCCEDB"></div>
<div class="a" style="left:830px;top:814px;width:1px;height:26px;background:#CCCEDB"></div>
<div class="a" style="left:1018px;top:814px;width:1px;height:26px;background:#CCCEDB"></div>
<div class="a" style="left:1206px;top:814px;width:1px;height:26px;background:#CCCEDB"></div>
<div class="a" style="left:1248px;top:814px;width:1px;height:26px;background:#CCCEDB"></div>
<div class="a" style="left:1406px;top:814px;width:1px;height:26px;background:#CCCEDB"></div>
<div class="a" style="left:1434px;top:814px;width:1px;height:26px;background:#CCCEDB"></div>
<svg class="a" style="left:94px;top:816px" width="9" height="10" viewBox="94 816 9 10"><rect x="95" y="817" width="1.5" height="1.5" fill="#555"/><rect x="97" y="817" width="1.5" height="1.5" fill="#555"/><rect x="99" y="817" width="1.5" height="1.5" fill="#555"/><rect x="97" y="819.8" width="1.5" height="1.5" fill="#555"/><rect x="99" y="819.8" width="1.5" height="1.5" fill="#555"/><rect x="99" y="822.6" width="1.5" height="1.5" fill="#555"/></svg>
<div class="t" style="left:111.7px;top:819px;transform:scaleX(0.941)">Códi...</div>
<div class="t" style="left:173.8px;top:819px;transform:scaleX(0.955)">Descripción</div>
<div class="t" style="left:834.5px;top:819px;transform:scaleX(0.927)">Proyecto</div>
<div class="t" style="left:1023.5px;top:819px;transform:scaleX(0.940)">Archivo</div>
<div class="t" style="left:1210.2px;top:819px;transform:scaleX(0.878)">Lí...</div>
<div class="t" style="left:1254.0px;top:819px;transform:scaleX(0.942)">Estado suprimido</div>

<!-- ===== SOLUTION EXPLORER ===== -->
<div class="a" style="left:1446px;top:89px;width:435px;height:495px;background:#F5F5F5;border:1px solid #CCCEDB"></div>
<div class="a" style="left:1447px;top:90px;width:433px;height:60px;background:#EEEEF2"></div>
<div class="t" style="left:1450.0px;top:94px;transform:scaleX(0.934)">Explorador de soluciones</div>
<svg class="a" style="left:1628px;top:100px" width="179" height="6"><rect x="0" y="0" width="1" height="1" fill="#868686"/><rect x="0" y="5" width="1" height="1" fill="#868686"/><rect x="2.5" y="2.5" width="1" height="1" fill="#A0A0A0"/><rect x="5" y="0" width="1" height="1" fill="#868686"/><rect x="5" y="5" width="1" height="1" fill="#868686"/><rect x="7.5" y="2.5" width="1" height="1" fill="#A0A0A0"/><rect x="10" y="0" width="1" height="1" fill="#868686"/><rect x="10" y="5" width="1" height="1" fill="#868686"/><rect x="12.5" y="2.5" width="1" height="1" fill="#A0A0A0"/><rect x="15" y="0" width="1" height="1" fill="#868686"/><rect x="15" y="5" width="1" height="1" fill="#868686"/><rect x="17.5" y="2.5" width="1" height="1" fill="#A0A0A0"/><rect x="20" y="0" width="1" height="1" fill="#868686"/><rect x="20" y="5" width="1" height="1" fill="#868686"/><rect x="22.5" y="2.5" width="1" height="1" fill="#A0A0A0"/><rect x="25" y="0" width="1" height="1" fill="#868686"/><rect x="25" y="5" width="1" height="1" fill="#868686"/><rect x="27.5" y="2.5" width="1" height="1" fill="#A0A0A0"/><rect x="30" y="0" width="1" height="1" fill="#868686"/><rect x="30" y="5" width="1" height="1" fill="#868686"/><rect x="32.5" y="2.5" width="1" height="1" fill="#A0A0A0"/><rect x="35" y="0" width="1" height="1" fill="#868686"/><rect x="35" y="5" width="1" height="1" fill="#868686"/><rect x="37.5" y="2.5" width="1" height="1" fill="#A0A0A0"/><rect x="40" y="0" width="1" height="1" fill="#868686"/><rect x="40" y="5" width="1" height="1" fill="#868686"/><rect x="42.5" y="2.5" width="1" height="1" fill="#A0A0A0"/><rect x="45" y="0" width="1" height="1" fill="#868686"/><rect x="45" y="5" width="1" height="1" fill="#868686"/><rect x="47.5" y="2.5" width="1" height="1" fill="#A0A0A0"/><rect x="50" y="0" width="1" height="1" fill="#868686"/><rect x="50" y="5" width="1" height="1" fill="#868686"/><rect x="52.5" y="2.5" width="1" height="1" fill="#A0A0A0"/><rect x="55" y="0" width="1" height="1" fill="#868686"/><rect x="55" y="5" width="1" height="1" fill="#868686"/><rect x="57.5" y="2.5" width="1" height="1" fill="#A0A0A0"/><rect x="60" y="0" width="1" height="1" fill="#868686"/><rect x="60" y="5" width="1" height="1" fill="#868686"/><rect x="62.5" y="2.5" width="1" height="1" fill="#A0A0A0"/><rect x="65" y="0" width="1" height="1" fill="#868686"/><rect x="65" y="5" width="1" height="1" fill="#868686"/><rect x="67.5" y="2.5" width="1" height="1" fill="#A0A0A0"/><rect x="70" y="0" width="1" height="1" fill="#868686"/><rect x="70" y="5" width="1" height="1" fill="#868686"/><rect x="72.5" y="2.5" width="1" height="1" fill="#A0A0A0"/><rect x="75" y="0" width="1" height="1" fill="#868686"/><rect x="75" y="5" width="1" height="1" fill="#868686"/><rect x="77.5" y="2.5" width="1" height="1" fill="#A0A0A0"/><rect x="80" y="0" width="1" height="1" fill="#868686"/><rect x="80" y="5" width="1" height="1" fill="#868686"/><rect x="82.5" y="2.5" width="1" height="1" fill="#A0A0A0"/><rect x="85" y="0" width="1" height="1" fill="#868686"/><rect x="85" y="5" width="1" height="1" fill="#868686"/><rect x="87.5" y="2.5" width="1" height="1" fill="#A0A0A0"/><rect x="90" y="0" width="1" height="1" fill="#868686"/><rect x="90" y="5" width="1" height="1" fill="#868686"/><rect x="92.5" y="2.5" width="1" height="1" fill="#A0A0A0"/><rect x="95" y="0" width="1" height="1" fill="#868686"/><rect x="95" y="5" width="1" height="1" fill="#868686"/><rect x="97.5" y="2.5" width="1" height="1" fill="#A0A0A0"/><rect x="100" y="0" width="1" height="1" fill="#868686"/><rect x="100" y="5" width="1" height="1" fill="#868686"/><rect x="102.5" y="2.5" width="1" height="1" fill="#A0A0A0"/><rect x="105" y="0" width="1" height="1" fill="#868686"/><rect x="105" y="5" width="1" height="1" fill="#868686"/><rect x="107.5" y="2.5" width="1" height="1" fill="#A0A0A0"/><rect x="110" y="0" width="1" height="1" fill="#868686"/><rect x="110" y="5" width="1" height="1" fill="#868686"/><rect x="112.5" y="2.5" width="1" height="1" fill="#A0A0A0"/><rect x="115" y="0" width="1" height="1" fill="#868686"/><rect x="115" y="5" width="1" height="1" fill="#868686"/><rect x="117.5" y="2.5" width="1" height="1" fill="#A0A0A0"/><rect x="120" y="0" width="1" height="1" fill="#868686"/><rect x="120" y="5" width="1" height="1" fill="#868686"/><rect x="122.5" y="2.5" width="1" height="1" fill="#A0A0A0"/><rect x="125" y="0" width="1" height="1" fill="#868686"/><rect x="125" y="5" width="1" height="1" fill="#868686"/><rect x="127.5" y="2.5" width="1" height="1" fill="#A0A0A0"/><rect x="130" y="0" width="1" height="1" fill="#868686"/><rect x="130" y="5" width="1" height="1" fill="#868686"/><rect x="132.5" y="2.5" width="1" height="1" fill="#A0A0A0"/><rect x="135" y="0" width="1" height="1" fill="#868686"/><rect x="135" y="5" width="1" height="1" fill="#868686"/><rect x="137.5" y="2.5" width="1" height="1" fill="#A0A0A0"/><rect x="140" y="0" width="1" height="1" fill="#868686"/><rect x="140" y="5" width="1" height="1" fill="#868686"/><rect x="142.5" y="2.5" width="1" height="1" fill="#A0A0A0"/><rect x="145" y="0" width="1" height="1" fill="#868686"/><rect x="145" y="5" width="1" height="1" fill="#868686"/><rect x="147.5" y="2.5" width="1" height="1" fill="#A0A0A0"/><rect x="150" y="0" width="1" height="1" fill="#868686"/><rect x="150" y="5" width="1" height="1" fill="#868686"/><rect x="152.5" y="2.5" width="1" height="1" fill="#A0A0A0"/><rect x="155" y="0" width="1" height="1" fill="#868686"/><rect x="155" y="5" width="1" height="1" fill="#868686"/><rect x="157.5" y="2.5" width="1" height="1" fill="#A0A0A0"/><rect x="160" y="0" width="1" height="1" fill="#868686"/><rect x="160" y="5" width="1" height="1" fill="#868686"/><rect x="162.5" y="2.5" width="1" height="1" fill="#A0A0A0"/><rect x="165" y="0" width="1" height="1" fill="#868686"/><rect x="165" y="5" width="1" height="1" fill="#868686"/><rect x="167.5" y="2.5" width="1" height="1" fill="#A0A0A0"/><rect x="170" y="0" width="1" height="1" fill="#868686"/><rect x="170" y="5" width="1" height="1" fill="#868686"/><rect x="172.5" y="2.5" width="1" height="1" fill="#A0A0A0"/><rect x="175" y="0" width="1" height="1" fill="#868686"/><rect x="175" y="5" width="1" height="1" fill="#868686"/><rect x="177.5" y="2.5" width="1" height="1" fill="#A0A0A0"/></svg>
<svg class="a" style="left:1818px;top:99px" width="10" height="6" viewBox="0 0 10 6"><path d="M0 0 H10 L5 6 Z" fill="#1E1E1E"/></svg>
<svg class="a" style="left:1838px;top:96px" width="11" height="14" viewBox="0 0 11 14"><path d="M2.5 0.5 H8.5 M3.5 0.5 V7.5 M7 0.5 V7.5 M0.5 7.5 H10.5 M5.5 7.5 V13.5" fill="none" stroke="#1E1E1E" stroke-width="1.5"/></svg>
<svg class="a" style="left:1859px;top:97px" width="12" height="12" viewBox="0 0 12 12"><path d="M1 1 L11 11 M11 1 L1 11" stroke="#1E1E1E" stroke-width="1.6"/></svg>
<svg class="a" style="left:1440px;top:115px" width="400" height="40" viewBox="1440 115 400 40">
<circle cx="1465" cy="134" r="7" fill="#C8C8C8"/>
<path d="M1469.5 134 H1461 M1464.5 130.2 L1460.7 134 L1464.5 137.8" fill="none" stroke="#EEEEF2" stroke-width="2"/>
<circle cx="1492" cy="134" r="7" fill="#C8C8C8"/>
<path d="M1487.5 134 H1496 M1492.5 130.2 L1496.3 134 L1492.5 137.8" fill="none" stroke="#EEEEF2" stroke-width="2"/>
<!-- home -->
<path d="M1512 134.5 L1519 127 L1526.5 134.5" fill="none" stroke="#424242" stroke-width="1.5"/>
<path d="M1513.5 133 V142.5 H1525 V133" fill="#EEEEF2" stroke="#424242" stroke-width="1.4"/>
<rect x="1517.5" y="136.5" width="3.5" height="6" fill="#424242"/>
<path d="M1523.5 125 V130" stroke="#424242" stroke-width="1.2"/>
<!-- sync -->
<path d="M1545 127 H1551 L1552.5 125.5 H1556 V138 H1545 Z" fill="#DCB067"/>
<rect x="1538.5" y="131.5" width="10.5" height="8.5" fill="#EEEEF2" stroke="#424242" stroke-width="1.5"/>
<rect x="1538.5" y="131.5" width="10.5" height="2" fill="#424242"/>
<path d="M1540 128 V126 H1544" fill="none" stroke="#00539C" stroke-width="1.3"/>
<path d="M1542.5 124 L1544.5 126 L1542.5 128" fill="#00539C"/>
<path d="M1555 136 V139.5 H1551" fill="none" stroke="#00539C" stroke-width="1.3"/>
<path d="M1552.5 137.5 L1550.5 139.5 L1552.5 141.5" fill="#00539C"/>
<path d="M1565 132 H1572 L1568.5 135.5 Z" fill="#717171"/>
<rect x="1579" y="121" width="1" height="24" fill="#CCCEDB"/>
<!-- history -->
<path d="M1592 124 H1599 L1595.5 128 Z" fill="#424242"/>
<path d="M1595.5 127 V130" stroke="#424242" stroke-width="1"/>
<circle cx="1601" cy="135.5" r="5.5" fill="none" stroke="#424242" stroke-width="1.4"/>
<path d="M1600.5 132 V136 H1603.5" fill="none" stroke="#424242" stroke-width="1.1"/>
<path d="M1616 132 H1624 L1620 135.5 Z" fill="#717171"/>
<!-- switch -->
<path d="M1647 130 H1634.5 M1638 126.5 L1634.5 130 L1638 133.5" fill="none" stroke="#424242" stroke-width="1.8"/>
<path d="M1634 137.5 H1646.5 M1643 134 L1646.5 137.5 L1643 141" fill="none" stroke="#424242" stroke-width="1.8"/>
<!-- refresh -->
<path d="M1666.5 128.5 A6 6 0 1 0 1673 134.5" fill="none" stroke="#00539C" stroke-width="2.2"/>
<path d="M1665 124.5 L1671 128.5 L1665 132.5 Z" fill="#00539C"/>
<!-- collapse -->
<rect x="1688" y="131.5" width="8" height="8" fill="#EEEEF2" stroke="#424242" stroke-width="1.4"/>
<path d="M1690.5 135.5 H1693.5" stroke="#00539C" stroke-width="1.2"/>
<path d="M1690.5 129 V127 H1701 V137 H1698.5" fill="none" stroke="#424242" stroke-width="1.2"/>
<path d="M1692.5 128 V126" stroke="#424242" stroke-width="0"/>
<!-- copy docs -->
<path d="M1713 138 V125.5 H1720 M1720 139 H1729.5 V128.5 L1726.5 125.5 H1721" fill="none" stroke="#424242" stroke-width="1.3"/>
<path d="M1717 142.5 V130.5 H1723.5 L1726.5 133.5 V142.5 Z" fill="#EEEEF2" stroke="#424242" stroke-width="1.3"/>
<path d="M1719 135.5 H1724.5 M1719 137.5 H1724.5 M1719 139.5 H1724.5" stroke="#424242" stroke-width="1"/>
<rect x="1739" y="121" width="1" height="24" fill="#CCCEDB"/>
<!-- <> -->
<path d="M1755 128.5 L1751 133.5 L1755 138.5 M1760 128.5 L1764 133.5 L1760 138.5" fill="none" stroke="#424242" stroke-width="1.6"/>
<!-- wrench -->
<path d="M1777.5 141.5 L1785 134" stroke="#424242" stroke-width="3.2" stroke-linecap="round"/>
<path d="M1786 127 C1788 125 1791.5 125 1793 126 L1789.5 129.5 L1790 131.5 L1792 132 L1795.5 128.5 C1796 131 1794.5 135 1790.5 135.5 C1788.5 135.5 1786.5 135 1785 133.5 C1784.5 131 1784.5 128.5 1786 127 Z" fill="#424242"/>
<rect x="1799.5" y="119.5" width="27" height="29" fill="none" stroke="#3399FF" stroke-width="1"/>
<path d="M1803 135.5 H1812" stroke="#424242" stroke-width="1"/>
<rect x="1811" y="131" width="9" height="5" fill="#424242"/>
</svg>

<div class="a" style="left:1447px;top:151px;width:433px;height:27px;background:#fff;border-top:1px solid #CCCEDB;border-bottom:1px solid #CCCEDB"></div>
<div class="t" style="left:1452.4px;top:156px;color:#717171;transform:scaleX(0.915)">Buscar en Explorador de soluciones (Ctrl+´)</div>
<svg class="a" style="left:1845px;top:156px" width="17" height="17" viewBox="0 0 17 17"><circle cx="10.5" cy="6.5" r="4.3" fill="none" stroke="#424242" stroke-width="1.8"/><path d="M7.5 9.5 L2 15" stroke="#424242" stroke-width="2.4" stroke-linecap="round"/></svg>
<svg class="a" style="left:1868px;top:163px" width="8" height="4" viewBox="0 0 8 4"><path d="M0 0 H8 L4 4 Z" fill="#717171"/></svg>

<div class="a" style="left:1447px;top:295px;width:433px;height:24px;background:#CCCEDB"></div>
<!-- tree -->
<svg class="a" style="left:1462px;top:183px" width="20" height="20" viewBox="1462 183 20 20"><rect x="1463" y="184" width="17.8" height="3.4" fill="#424242"/><rect x="1463" y="184" width="1.6" height="8.3" fill="#5A5A5A"/><rect x="1479.2" y="184" width="1.6" height="15" fill="#5A5A5A"/><rect x="1474.7" y="197.4" width="6.1" height="1.6" fill="#5A5A5A"/><g transform="translate(1463 191.8) scale(0.43)"><path d="M17.7 0 L24 3.4 L24 20.6 L17.7 24 L8.5 14.7 L2.8 18.9 L0 17.2 L0 6.5 L2.8 5 L8.5 9.3 Z M17.8 6.7 L11.8 11.9 L17.8 17.2 Z M3 8.7 L3 15.1 L6 11.9 Z" fill="#8E5FD8" fill-rule="evenodd"/></g></svg>
<div class="t" style="left:1488.0px;top:183px;transform:scaleX(0.924)">Solución "DeserializeJson" (1 de 1 proyecto)</div>
<svg class="a" style="left:1460px;top:211px" width="9" height="9" viewBox="0 0 9 9"><path d="M8.5 0 V8.5 H0 Z" fill="#1E1E1E"/></svg>
<svg class="a" style="left:1486px;top:208px" width="18" height="16" viewBox="0 0 18 16"><rect x="0.7" y="0.7" width="16.6" height="14.6" fill="#F0F0F0" stroke="#4E9A4E" stroke-width="1.4"/><path d="M8 4.6 C7.5 4 6.8 3.7 6 3.7 C4.3 3.7 3.2 5.2 3.2 7.6 C3.2 10 4.3 11.5 6 11.5 C6.8 11.5 7.5 11.2 8 10.6" fill="none" stroke="#505050" stroke-width="1.3"/><path d="M10.6 3.5 L10 10 M13.4 3.5 L12.8 10 M9.2 5.5 H14.6 M9 8 H14.4" stroke="#505050" stroke-width="1.1"/></svg>
<div class="t" style="left:1510.5px;top:206px;font-weight:bold;transform:scaleX(0.892)">DeserializeJson</div>

<svg class="a" style="left:1483px;top:232px" width="7" height="12" viewBox="0 0 7 12"><path d="M0.8 0.8 L6 6 L0.8 11.2 Z" fill="none" stroke="#1E1E1E" stroke-width="1.3"/></svg>
<svg class="a" style="left:1508px;top:230px" width="18" height="18" viewBox="0 0 16 16"><path d="M1.5 14.5 L8 8" stroke="#424242" stroke-width="3" stroke-linecap="round"/><path d="M9 2 C11 0.5 14 0.8 14.5 1.5 L11.5 4.5 L12 6 L13.5 6.5 L16 3.5 C16.3 6 14.5 9 11.5 9 C10 9 8.5 8.5 7.5 7.5 C7 5 7.5 3.5 9 2 Z" fill="#424242"/></svg>
<div class="t" style="left:1532.1px;top:229px;transform:scaleX(0.929)">Properties</div>

<svg class="a" style="left:1483px;top:255px" width="7" height="12" viewBox="0 0 7 12"><path d="M0.8 0.8 L6 6 L0.8 11.2 Z" fill="none" stroke="#1E1E1E" stroke-width="1.3"/></svg>
<svg class="a" style="left:1508px;top:257px" width="18" height="9" viewBox="0 0 18 9"><rect x="0" y="2" width="5" height="5" fill="#424242"/><rect x="5" y="4" width="3" height="1.5" fill="#424242"/><rect x="9" y="0" width="9" height="9" fill="#424242"/></svg>
<div class="t" style="left:1532.3px;top:252px;transform:scaleX(0.898)">Referencias</div>

<svg class="a" style="left:1505px;top:270px" width="24" height="28" viewBox="1505 270 24 28"><g transform="translate(0 0)"><path d="M1511.5 276.8 H1520 L1524 280.8 V293 H1514 V280 Z" fill="#EFEFEF"/><path d="M1511.5 279.6 V276.8 H1520 L1524.2 281 V293 H1515.4" fill="none" stroke="#555" stroke-width="1.4"/><path d="M1519.8 277 V281.2 H1524" fill="none" stroke="#555" stroke-width="1.1"/><circle cx="1512" cy="285" r="3.9" fill="#424242"/><rect x="1511" y="280.5" width="2" height="3.6" fill="#F5F5F5"/><rect x="1510.9" y="287" width="2.2" height="6.6" rx="1" fill="#424242"/></g></svg>
<div class="t" style="left:1533.2px;top:275px;transform:scaleX(0.969)">App.config</div>

<svg class="a" style="left:1483px;top:301px" width="7" height="12" viewBox="0 0 7 12"><path d="M0.8 0.8 L6 6 L0.8 11.2 Z" fill="none" stroke="#1E1E1E" stroke-width="1.3"/></svg>
<svg class="a" style="left:1508px;top:300px" width="20" height="16" viewBox="1508 300 20 16"><g transform="translate(0 0)"><path d="M1516.4 305 C1515.8 304.3 1515 303.9 1514 303.9 C1512.2 303.9 1511.3 305.8 1511.3 307.8 C1511.3 309.8 1512.2 311.7 1514 311.7 C1515 311.7 1515.8 311.3 1516.4 310.6" fill="none" stroke="#2D8A2D" stroke-width="2.1"/><path d="M1520 303.2 L1519.6 309.6 M1523.2 303.2 L1522.8 309.6 M1518.2 305.3 H1525 M1518 307.7 H1524.8" stroke="#2D8A2D" stroke-width="1.5"/></g></svg>
<div class="t" style="left:1532.4px;top:298px;transform:scaleX(0.842)">Feeds.cs</div>

<svg class="a" style="left:1505px;top:316px" width="24" height="28" viewBox="1505 316 24 28"><g transform="translate(0 46)"><path d="M1511.5 276.8 H1520 L1524 280.8 V293 H1514 V280 Z" fill="#EFEFEF"/><path d="M1511.5 279.6 V276.8 H1520 L1524.2 281 V293 H1515.4" fill="none" stroke="#555" stroke-width="1.4"/><path d="M1519.8 277 V281.2 H1524" fill="none" stroke="#555" stroke-width="1.1"/><circle cx="1512" cy="285" r="3.9" fill="#424242"/><rect x="1511" y="280.5" width="2" height="3.6" fill="#F5F5F5"/><rect x="1510.9" y="287" width="2.2" height="6.6" rx="1" fill="#424242"/></g></svg>
<div class="t" style="left:1532.3px;top:321px;transform:scaleX(0.936)">packages.config</div>

<svg class="a" style="left:1483px;top:347px" width="7" height="12" viewBox="0 0 7 12"><path d="M0.8 0.8 L6 6 L0.8 11.2 Z" fill="none" stroke="#1E1E1E" stroke-width="1.3"/></svg>
<svg class="a" style="left:1508px;top:346px" width="20" height="16" viewBox="1508 346 20 16"><g transform="translate(0 46)"><path d="M1516.4 305 C1515.8 304.3 1515 303.9 1514 303.9 C1512.2 303.9 1511.3 305.8 1511.3 307.8 C1511.3 309.8 1512.2 311.7 1514 311.7 C1515 311.7 1515.8 311.3 1516.4 310.6" fill="none" stroke="#2D8A2D" stroke-width="2.1"/><path d="M1520 303.2 L1519.6 309.6 M1523.2 303.2 L1522.8 309.6 M1518.2 305.3 H1525 M1518 307.7 H1524.8" stroke="#2D8A2D" stroke-width="1.5"/></g></svg>
<div class="t" style="left:1532.3px;top:344px;transform:scaleX(0.897)">Program.cs</div>

<!-- bottom tabs -->
<div class="a" style="left:1446px;top:583px;width:181px;height:25px;background:#F5F5F5;border:1px solid #CCCEDB;border-top:none"></div>
<div class="t" style="left:1452.8px;top:586px;color:#0E70C0;transform:scaleX(0.930)">Explorador de soluciones</div>
<div class="t" style="left:1633.7px;top:586px;transform:scaleX(0.916);color:#444">Team Explorer</div>

<!-- ===== PROPIEDADES ===== -->
<div class="a" style="left:1446px;top:616px;width:435px;height:377px;background:#F5F5F5;border:1px solid #CCCEDB"></div>
<div class="a" style="left:1447px;top:617px;width:433px;height:27px;background:#EEEEF2"></div>
<div class="t" style="left:1450.1px;top:621px;transform:scaleX(0.933)">Propiedades</div>
<svg class="a" style="left:1544px;top:627px" width="264" height="6"><rect x="0" y="0" width="1" height="1" fill="#868686"/><rect x="0" y="5" width="1" height="1" fill="#868686"/><rect x="2.5" y="2.5" width="1" height="1" fill="#A0A0A0"/><rect x="5" y="0" width="1" height="1" fill="#868686"/><rect x="5" y="5" width="1" height="1" fill="#868686"/><rect x="7.5" y="2.5" width="1" height="1" fill="#A0A0A0"/><rect x="10" y="0" width="1" height="1" fill="#868686"/><rect x="10" y="5" width="1" height="1" fill="#868686"/><rect x="12.5" y="2.5" width="1" height="1" fill="#A0A0A0"/><rect x="15" y="0" width="1" height="1" fill="#868686"/><rect x="15" y="5" width="1" height="1" fill="#868686"/><rect x="17.5" y="2.5" width="1" height="1" fill="#A0A0A0"/><rect x="20" y="0" width="1" height="1" fill="#868686"/><rect x="20" y="5" width="1" height="1" fill="#868686"/><rect x="22.5" y="2.5" width="1" height="1" fill="#A0A0A0"/><rect x="25" y="0" width="1" height="1" fill="#868686"/><rect x="25" y="5" width="1" height="1" fill="#868686"/><rect x="27.5" y="2.5" width="1" height="1" fill="#A0A0A0"/><rect x="30" y="0" width="1" height="1" fill="#868686"/><rect x="30" y="5" width="1" height="1" fill="#868686"/><rect x="32.5" y="2.5" width="1" height="1" fill="#A0A0A0"/><rect x="35" y="0" width="1" height="1" fill="#868686"/><rect x="35" y="5" width="1" height="1" fill="#868686"/><rect x="37.5" y="2.5" width="1" height="1" fill="#A0A0A0"/><rect x="40" y="0" width="1" height="1" fill="#868686"/><rect x="40" y="5" width="1" height="1" fill="#868686"/><rect x="42.5" y="2.5" width="1" height="1" fill="#A0A0A0"/><rect x="45" y="0" width="1" height="1" fill="#868686"/><rect x="45" y="5" width="1" height="1" fill="#868686"/><rect x="47.5" y="2.5" width="1" height="1" fill="#A0A0A0"/><rect x="50" y="0" width="1" height="1" fill="#868686"/><rect x="50" y="5" width="1" height="1" fill="#868686"/><rect x="52.5" y="2.5" width="1" height="1" fill="#A0A0A0"/><rect x="55" y="0" width="1" height="1" fill="#868686"/><rect x="55" y="5" width="1" height="1" fill="#868686"/><rect x="57.5" y="2.5" width="1" height="1" fill="#A0A0A0"/><rect x="60" y="0" width="1" height="1" fill="#868686"/><rect x="60" y="5" width="1" height="1" fill="#868686"/><rect x="62.5" y="2.5" width="1" height="1" fill="#A0A0A0"/><rect x="65" y="0" width="1" height="1" fill="#868686"/><rect x="65" y="5" width="1" height="1" fill="#868686"/><rect x="67.5" y="2.5" width="1" height="1" fill="#A0A0A0"/><rect x="70" y="0" width="1" height="1" fill="#868686"/><rect x="70" y="5" width="1" height="1" fill="#868686"/><rect x="72.5" y="2.5" width="1" height="1" fill="#A0A0A0"/><rect x="75" y="0" width="1" height="1" fill="#868686"/><rect x="75" y="5" width="1" height="1" fill="#868686"/><rect x="77.5" y="2.5" width="1" height="1" fill="#A0A0A0"/><rect x="80" y="0" width="1" height="1" fill="#868686"/><rect x="80" y="5" width="1" height="1" fill="#868686"/><rect x="82.5" y="2.5" width="1" height="1" fill="#A0A0A0"/><rect x="85" y="0" width="1" height="1" fill="#868686"/><rect x="85" y="5" width="1" height="1" fill="#868686"/><rect x="87.5" y="2.5" width="1" height="1" fill="#A0A0A0"/><rect x="90" y="0" width="1" height="1" fill="#868686"/><rect x="90" y="5" width="1" height="1" fill="#868686"/><rect x="92.5" y="2.5" width="1" height="1" fill="#A0A0A0"/><rect x="95" y="0" width="1" height="1" fill="#868686"/><rect x="95" y="5" width="1" height="1" fill="#868686"/><rect x="97.5" y="2.5" width="1" height="1" fill="#A0A0A0"/><rect x="100" y="0" width="1" height="1" fill="#868686"/><rect x="100" y="5" width="1" height="1" fill="#868686"/><rect x="102.5" y="2.5" width="1" height="1" fill="#A0A0A0"/><rect x="105" y="0" width="1" height="1" fill="#868686"/><rect x="105" y="5" width="1" height="1" fill="#868686"/><rect x="107.5" y="2.5" width="1" height="1" fill="#A0A0A0"/><rect x="110" y="0" width="1" height="1" fill="#868686"/><rect x="110" y="5" width="1" height="1" fill="#868686"/><rect x="112.5" y="2.5" width="1" height="1" fill="#A0A0A0"/><rect x="115" y="0" width="1" height="1" fill="#868686"/><rect x="115" y="5" width="1" height="1" fill="#868686"/><rect x="117.5" y="2.5" width="1" height="1" fill="#A0A0A0"/><rect x="120" y="0" width="1" height="1" fill="#868686"/><rect x="120" y="5" width="1" height="1" fill="#868686"/><rect x="122.5" y="2.5" width="1" height="1" fill="#A0A0A0"/><rect x="125" y="0" width="1" height="1" fill="#868686"/><rect x="125" y="5" width="1" height="1" fill="#868686"/><rect x="127.5" y="2.5" width="1" height="1" fill="#A0A0A0"/><rect x="130" y="0" width="1" height="1" fill="#868686"/><rect x="130" y="5" width="1" height="1" fill="#868686"/><rect x="132.5" y="2.5" width="1" height="1" fill="#A0A0A0"/><rect x="135" y="0" width="1" height="1" fill="#868686"/><rect x="135" y="5" width="1" height="1" fill="#868686"/><rect x="137.5" y="2.5" width="1" height="1" fill="#A0A0A0"/><rect x="140" y="0" width="1" height="1" fill="#868686"/><rect x="140" y="5" width="1" height="1" fill="#868686"/><rect x="142.5" y="2.5" width="1" height="1" fill="#A0A0A0"/><rect x="145" y="0" width="1" height="1" fill="#868686"/><rect x="145" y="5" width="1" height="1" fill="#868686"/><rect x="147.5" y="2.5" width="1" height="1" fill="#A0A0A0"/><rect x="150" y="0" width="1" height="1" fill="#868686"/><rect x="150" y="5" width="1" height="1" fill="#868686"/><rect x="152.5" y="2.5" width="1" height="1" fill="#A0A0A0"/><rect x="155" y="0" width="1" height="1" fill="#868686"/><rect x="155" y="5" width="1" height="1" fill="#868686"/><rect x="157.5" y="2.5" width="1" height="1" fill="#A0A0A0"/><rect x="160" y="0" width="1" height="1" fill="#868686"/><rect x="160" y="5" width="1" height="1" fill="#868686"/><rect x="162.5" y="2.5" width="1" height="1" fill="#A0A0A0"/><rect x="165" y="0" width="1" height="1" fill="#868686"/><rect x="165" y="5" width="1" height="1" fill="#868686"/><rect x="167.5" y="2.5" width="1" height="1" fill="#A0A0A0"/><rect x="170" y="0" width="1" height="1" fill="#868686"/><rect x="170" y="5" width="1" height="1" fill="#868686"/><rect x="172.5" y="2.5" width="1" height="1" fill="#A0A0A0"/><rect x="175" y="0" width="1" height="1" fill="#868686"/><rect x="175" y="5" width="1" height="1" fill="#868686"/><rect x="177.5" y="2.5" width="1" height="1" fill="#A0A0A0"/><rect x="180" y="0" width="1" height="1" fill="#868686"/><rect x="180" y="5" width="1" height="1" fill="#868686"/><rect x="182.5" y="2.5" width="1" height="1" fill="#A0A0A0"/><rect x="185" y="0" width="1" height="1" fill="#868686"/><rect x="185" y="5" width="1" height="1" fill="#868686"/><rect x="187.5" y="2.5" width="1" height="1" fill="#A0A0A0"/><rect x="190" y="0" width="1" height="1" fill="#868686"/><rect x="190" y="5" width="1" height="1" fill="#868686"/><rect x="192.5" y="2.5" width="1" height="1" fill="#A0A0A0"/><rect x="195" y="0" width="1" height="1" fill="#868686"/><rect x="195" y="5" width="1" height="1" fill="#868686"/><rect x="197.5" y="2.5" width="1" height="1" fill="#A0A0A0"/><rect x="200" y="0" width="1" height="1" fill="#868686"/><rect x="200" y="5" width="1" height="1" fill="#868686"/><rect x="202.5" y="2.5" width="1" height="1" fill="#A0A0A0"/><rect x="205" y="0" width="1" height="1" fill="#868686"/><rect x="205" y="5" width="1" height="1" fill="#868686"/><rect x="207.5" y="2.5" width="1" height="1" fill="#A0A0A0"/><rect x="210" y="0" width="1" height="1" fill="#868686"/><rect x="210" y="5" width="1" height="1" fill="#868686"/><rect x="212.5" y="2.5" width="1" height="1" fill="#A0A0A0"/><rect x="215" y="0" width="1" height="1" fill="#868686"/><rect x="215" y="5" width="1" height="1" fill="#868686"/><rect x="217.5" y="2.5" width="1" height="1" fill="#A0A0A0"/><rect x="220" y="0" width="1" height="1" fill="#868686"/><rect x="220" y="5" width="1" height="1" fill="#868686"/><rect x="222.5" y="2.5" width="1" height="1" fill="#A0A0A0"/><rect x="225" y="0" width="1" height="1" fill="#868686"/><rect x="225" y="5" width="1" height="1" fill="#868686"/><rect x="227.5" y="2.5" width="1" height="1" fill="#A0A0A0"/><rect x="230" y="0" width="1" height="1" fill="#868686"/><rect x="230" y="5" width="1" height="1" fill="#868686"/><rect x="232.5" y="2.5" width="1" height="1" fill="#A0A0A0"/><rect x="235" y="0" width="1" height="1" fill="#868686"/><rect x="235" y="5" width="1" height="1" fill="#868686"/><rect x="237.5" y="2.5" width="1" height="1" fill="#A0A0A0"/><rect x="240" y="0" width="1" height="1" fill="#868686"/><rect x="240" y="5" width="1" height="1" fill="#868686"/><rect x="242.5" y="2.5" width="1" height="1" fill="#A0A0A0"/><rect x="245" y="0" width="1" height="1" fill="#868686"/><rect x="245" y="5" width="1" height="1" fill="#868686"/><rect x="247.5" y="2.5" width="1" height="1" fill="#A0A0A0"/><rect x="250" y="0" width="1" height="1" fill="#868686"/><rect x="250" y="5" width="1" height="1" fill="#868686"/><rect x="252.5" y="2.5" width="1" height="1" fill="#A0A0A0"/><rect x="255" y="0" width="1" height="1" fill="#868686"/><rect x="255" y="5" width="1" height="1" fill="#868686"/><rect x="257.5" y="2.5" width="1" height="1" fill="#A0A0A0"/><rect x="260" y="0" width="1" height="1" fill="#868686"/><rect x="260" y="5" width="1" height="1" fill="#868686"/><rect x="262.5" y="2.5" width="1" height="1" fill="#A0A0A0"/></svg>
<svg class="a" style="left:1818px;top:626px" width="10" height="6" viewBox="0 0 10 6"><path d="M0 0 H10 L5 6 Z" fill="#1E1E1E"/></svg>
<svg class="a" style="left:1838px;top:623px" width="11" height="14" viewBox="0 0 11 14"><path d="M2.5 0.5 H8.5 M3.5 0.5 V7.5 M7 0.5 V7.5 M0.5 7.5 H10.5 M5.5 7.5 V13.5" fill="none" stroke="#1E1E1E" stroke-width="1.5"/></svg>
<svg class="a" style="left:1859px;top:624px" width="12" height="12" viewBox="0 0 12 12"><path d="M1 1 L11 11 M11 1 L1 11" stroke="#1E1E1E" stroke-width="1.6"/></svg>
<div class="a" style="left:1447px;top:644px;width:433px;height:28px;background:#fff"></div>
<svg class="a" style="left:1866px;top:657px" width="8" height="4" viewBox="0 0 8 4"><path d="M0 0 H8 L4 4 Z" fill="#717171"/></svg>
<div class="a" style="left:1447px;top:672px;width:433px;height:33px;background:#EEEEF2"></div>
<div class="a" style="left:1450px;top:674px;width:29px;height:28px;border:1px solid #3399FF"></div>
<svg class="a" style="left:1450px;top:674px" width="30" height="30" viewBox="1450 674 30 30"><rect x="1456" y="680.2" width="5" height="5" fill="#2A2A2A"/><rect x="1456" y="691.2" width="5" height="5" fill="#2A2A2A"/><path d="M1458.5 681.5 V684 M1457.2 682.7 H1459.8 M1458.5 692.5 V695 M1457.2 693.7 H1459.8" stroke="#fff" stroke-width="1"/><path d="M1463 680.6 H1469 M1463 682.6 H1469 M1463 684.6 H1469 M1463 686.6 H1469 M1463 688.6 H1469 M1463 690.6 H1469 M1463 693 H1469 M1463 695.6 H1469 M1470.2 682.6 H1473 M1470.2 684.6 H1473 M1470.2 686.6 H1473 M1470.2 688.6 H1473 M1470.2 690.6 H1473 M1470.2 695.6 H1473" stroke="#2A2A2A" stroke-width="1"/></svg>
<svg class="a" style="left:1480px;top:674px" width="26" height="30" viewBox="1480 674 26 30"><rect x="1485" y="680" width="8" height="8.6" rx="0.8" fill="#3A3A3A"/><path d="M1486.7 687.3 L1489 681.5 L1491.3 687.3 M1487.6 685.3 H1490.4" fill="none" stroke="#D8D8D8" stroke-width="1.1"/><path d="M1486.3 691.5 H1491.7 L1486.3 696.5 H1492" fill="none" stroke="#2A2A2A" stroke-width="1.6"/><path d="M1498.5 683.5 V694.5 M1495.5 691 L1498.5 694.8 L1501.5 691" fill="none" stroke="#00539C" stroke-width="1.9"/></svg>
<div class="a" style="left:1511px;top:676px;width:1px;height:25px;background:#CCCEDB"></div>
<svg class="a" style="left:1519px;top:679px" width="18" height="18" viewBox="0 0 16 16"><path d="M1.5 14.5 L8 8" stroke="#BDBDBD" stroke-width="3" stroke-linecap="round"/><path d="M9 2 C11 0.5 14 0.8 14.5 1.5 L11.5 4.5 L12 6 L13.5 6.5 L16 3.5 C16.3 6 14.5 9 11.5 9 C10 9 8.5 8.5 7.5 7.5 C7 5 7.5 3.5 9 2 Z" fill="#BDBDBD"/></svg>
<div class="a" style="left:1447px;top:913px;width:433px;height:1px;background:#EDEDED"></div>

<!-- PROPS -->

<!-- ===== STATUS BAR ===== -->
<div class="a" style="left:0;top:1000px;width:1919px;height:30px;background:#007ACC"></div>
<div class="a" style="left:0;top:1030px;width:1919px;height:1px;background:#2A2B25"></div>
<div class="a" style="left:312px;top:1030px;width:61px;height:1px;background:#5E5E5E"></div>
<svg class="a" style="left:5px;top:1008px" width="21" height="15" viewBox="0 0 21 15"><path d="M5 1 H20 L16 14 H1 Z" fill="none" stroke="#fff" stroke-width="1.3"/></svg>
<div class="t" style="left:34.4px;top:1006px;color:#fff;transform:scaleX(0.925)">Listo</div>
<svg class="a" style="left:1574px;top:1008px" width="13" height="15" viewBox="0 0 13 15"><path d="M6.5 15 V2.5 M1.5 7 L6.5 2 L11.5 7" fill="none" stroke="#D8D8D8" stroke-width="2.2"/></svg>
<div class="t" style="left:1597.1px;top:1006px;color:#fff;transform:scaleX(0.958)">Agregar al control de código fuente</div>
<svg class="a" style="left:1843px;top:1012px" width="11" height="6" viewBox="0 0 11 6"><path d="M0 6 L5.5 0 L11 6 Z" fill="#fff"/></svg>
<svg class="a" style="left:1880px;top:1005px" width="18" height="20" viewBox="0 0 18 20"><path d="M9 1 C4.5 1 3 5 3 9 V13 L0.5 16 H17.5 L15 13 V9 C15 5 13.5 1 9 1 Z" fill="#D8D8D8"/><path d="M6.5 17.5 A2.5 2.5 0 0 0 11.5 17.5 Z" fill="#D8D8D8"/></svg>

</body></html>
